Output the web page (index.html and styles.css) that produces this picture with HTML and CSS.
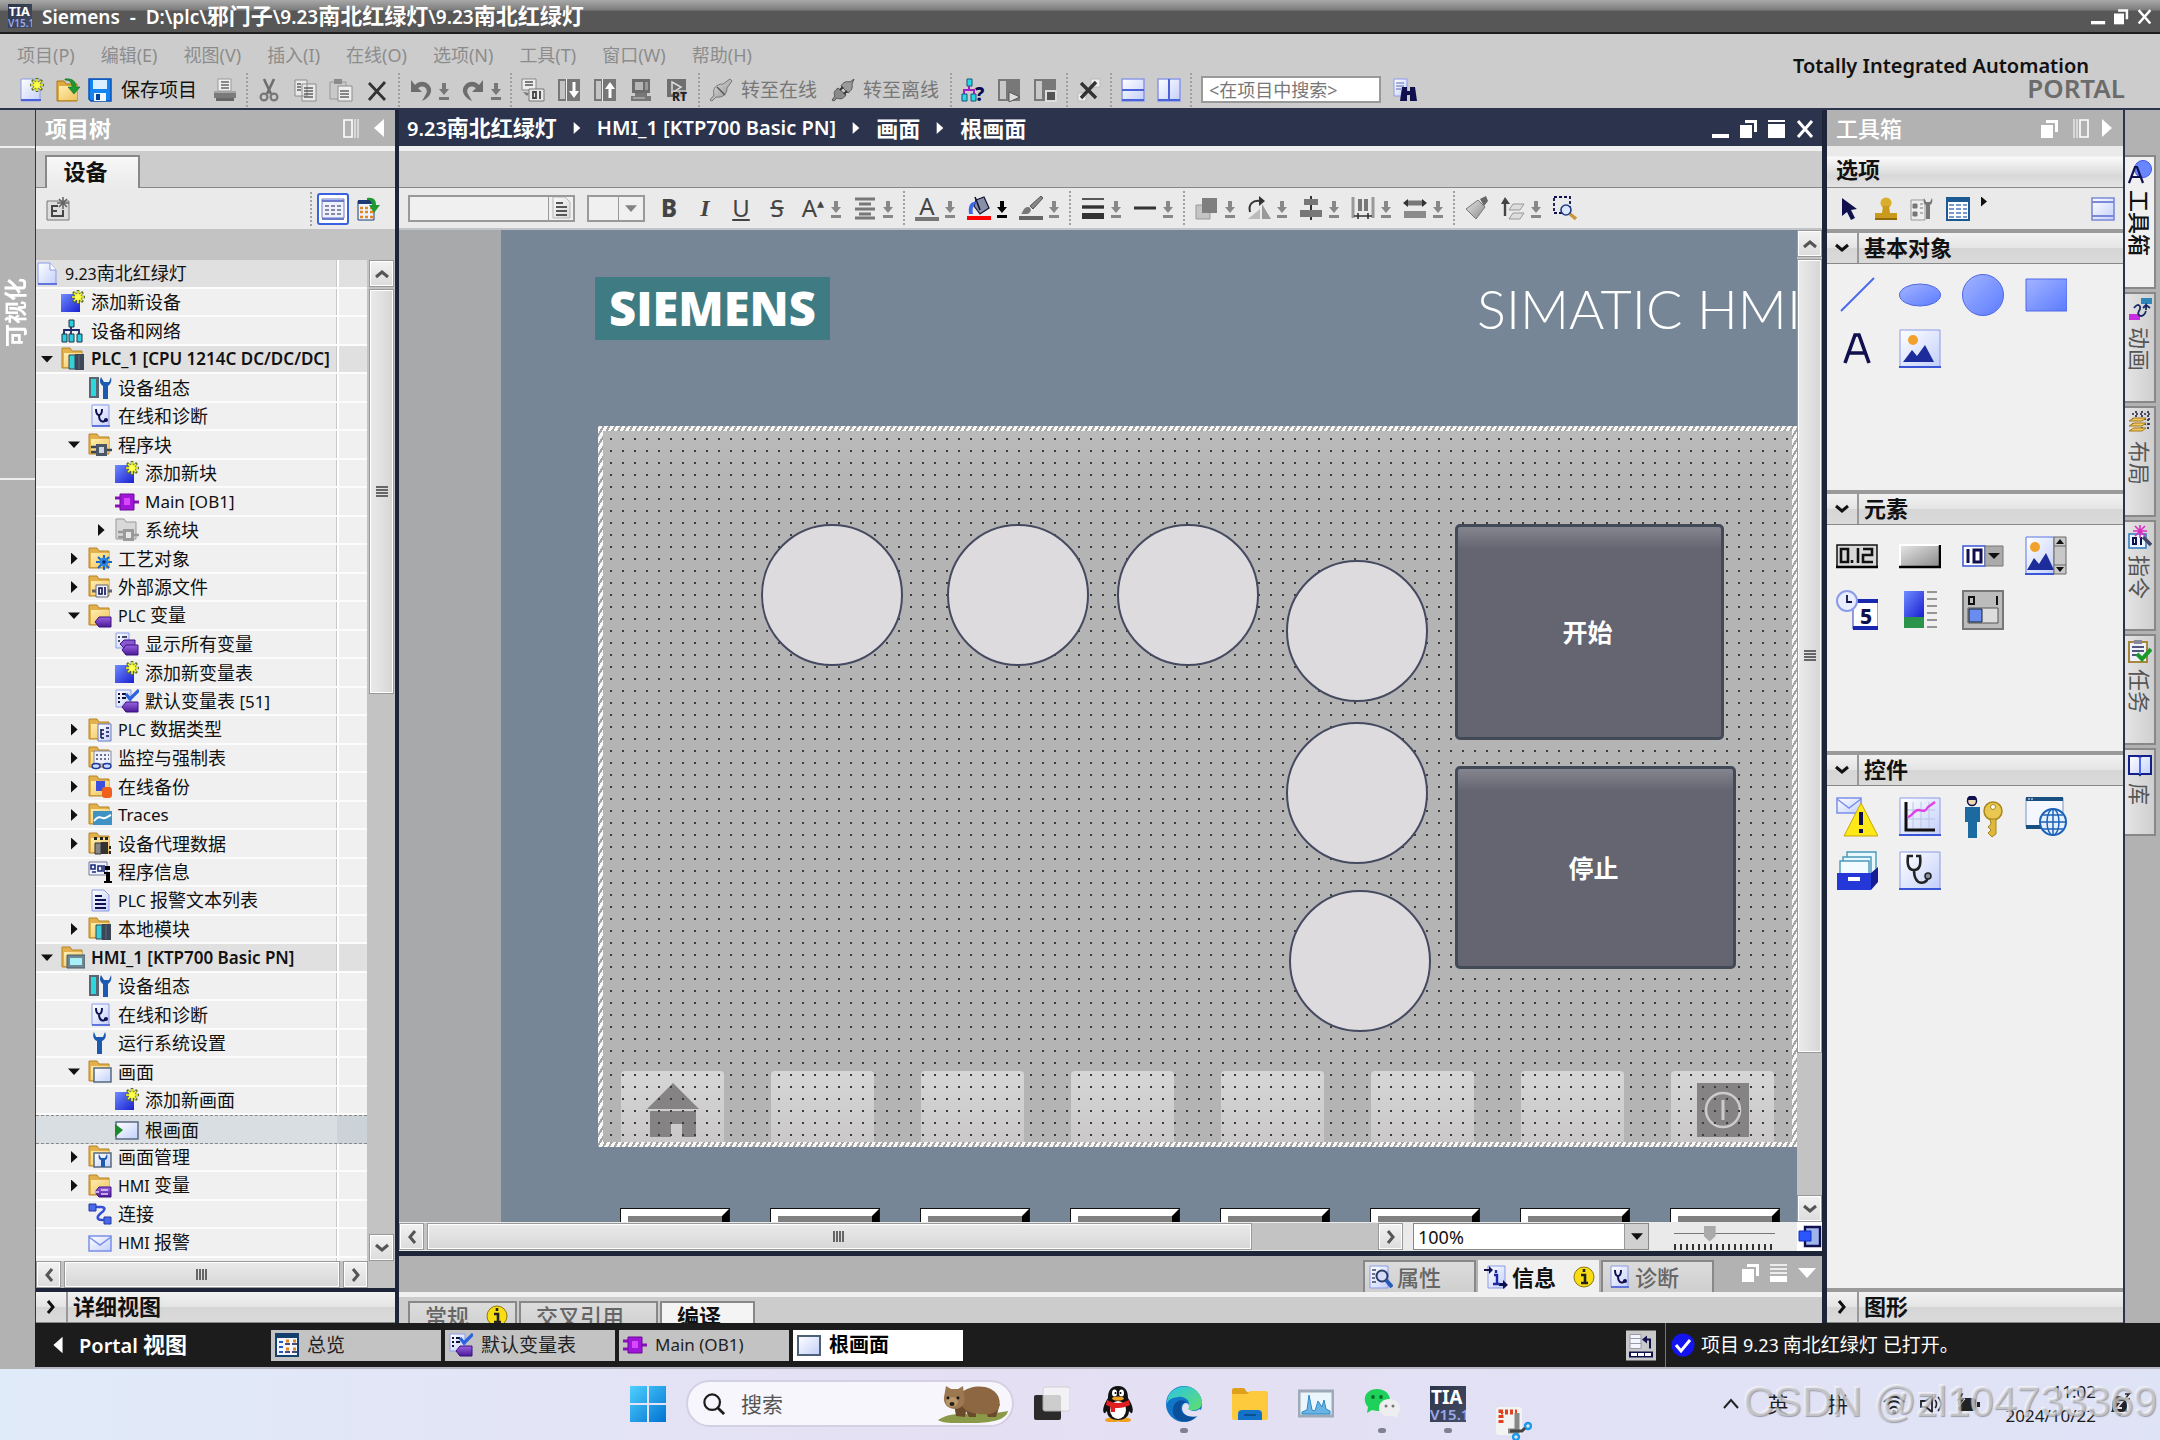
FILE: index.html
```html
<!DOCTYPE html>
<html lang="zh-CN">

<head>
    <meta charset="UTF-8">
    <meta name="viewport" content="width=device-width, initial-scale=1.0">
    <title>Siemens - 9.23南北红绿灯</title>
    <link rel="stylesheet" href="styles.css">
</head>

<body>
    <!-- icon sprite -->
    <svg class="sprite" aria-hidden="true">
        <defs>
            <linearGradient id="g-blue" x1="0" y1="0" x2="1" y2="1"><stop offset="0" stop-color="#6f8cff"/><stop offset="1" stop-color="#1a1fd0"/></linearGradient>
            <linearGradient id="g-soft" x1="0" y1="0" x2="1" y2="1"><stop offset="0" stop-color="#a3b5ff"/><stop offset="1" stop-color="#5b7bff"/></linearGradient>
            <linearGradient id="g-page" x1="0" y1="0" x2="1" y2="1"><stop offset="0" stop-color="#fff"/><stop offset="1" stop-color="#c3cffa"/></linearGradient>
            <linearGradient id="g-fold" x1="0" y1="0" x2="1" y2="1"><stop offset="0" stop-color="#ffeeb0"/><stop offset="1" stop-color="#eec25c"/></linearGradient>
            <linearGradient id="g-gray" x1="0" y1="0" x2="1" y2="1"><stop offset="0" stop-color="#e6e6e6"/><stop offset="1" stop-color="#8a8a8a"/></linearGradient>
            <linearGradient id="g-pur" x1="0" y1="0" x2="0" y2="1"><stop offset="0" stop-color="#9a62e0"/><stop offset="1" stop-color="#4a1a96"/></linearGradient>
            <linearGradient id="g-edge" x1="0" y1="0" x2="1" y2="1"><stop offset="0" stop-color="#2cc3e8"/><stop offset="1" stop-color="#5fe06a"/></linearGradient>
            <linearGradient id="g-win" x1="0" y1="0" x2="1" y2="1"><stop offset="0" stop-color="#4fd0ff"/><stop offset="1" stop-color="#0072d0"/></linearGradient>
            <linearGradient id="g-tia" x1="0" y1="0" x2="1" y2="1"><stop offset="0" stop-color="#2c3448"/><stop offset="1" stop-color="#454e66"/></linearGradient>
        </defs>
        <symbol id="star" viewBox="0 0 24 24"><path d="M17 0v14M10 7h14M12 2l10 10M22 2L12 12" stroke="#5a6b20" stroke-width="2.6"/><path d="M17 1v12M11 7h12M13 3l8 8M21 3l-8 8" stroke="#ffff30" stroke-width="1.5"/><circle cx="17" cy="7" r="3" fill="#ffff50"/></symbol>
        <symbol id="new" viewBox="0 0 24 24"><path d="M1 1h19v22H1z" fill="url(#g-page)" stroke="#8b9be8"/><path d="M1 22h20" stroke="#4b62d8" stroke-width="2"/><use href="#star"/></symbol>
        <symbol id="open" viewBox="0 0 24 24"><path d="M1 3h7l2 3h11v17H1z" fill="#e0a93c" stroke="#a87918"/><path d="M3 8h18v14H3z" fill="url(#g-fold)"/><path d="M9 1c8-1 11 3 11 8h4l-6 7-6-7h4c0-4-2-7-7-7z" fill="#1f9a32" stroke="#0d6a1c" stroke-width=".6"/></symbol>
        <symbol id="save" viewBox="0 0 24 24"><path d="M1 1h22v22H3l-2-2z" fill="#1583f0" stroke="#0a50b8" stroke-width="1.5"/><path d="M5 2h14v9H5z" fill="#d8f0ff"/><path d="M6 15h12v8H6z" fill="#eef6ff"/><path d="M8 16h4v6H8z" fill="#063f9a"/></symbol>
        <symbol id="print" viewBox="0 0 24 24"><path d="M5 1h13v12H5z" fill="#f0f0f0" stroke="#999"/><path d="M8 4h8M8 7h8M8 10h8" stroke="#666" stroke-width="1.4"/><path d="M1 13h22v7H1z" fill="#7a7a7a"/><path d="M1 13h22v2H1z" fill="#a5a5a5"/><path d="M3 20h18v3H3z" fill="#666"/></symbol>
        <symbol id="cut" viewBox="0 0 24 24"><path d="M7 1l7 15M17 1l-7 15" stroke="#6e6e6e" stroke-width="2.6"/><circle cx="7" cy="19" r="3.4" fill="none" stroke="#777" stroke-width="2.2"/><circle cx="17" cy="19" r="3.4" fill="none" stroke="#777" stroke-width="2.2"/></symbol>
        <symbol id="copy" viewBox="0 0 24 24"><path d="M2 2h12v16H2zM9 6h14v17H9z" fill="#e9e9e9" stroke="#8c8c8c"/><path d="M4 6h4M4 9h4M4 12h4M11 10h9M11 13h9M11 16h9M11 19h9" stroke="#5f5f5f" stroke-width="1.5"/></symbol>
        <symbol id="paste" viewBox="0 0 24 24"><path d="M1 4h16v17H1z" fill="#c9c9c9" stroke="#999"/><path d="M5 1h8v5H5z" fill="#8b8b8b"/><path d="M9 8h14v15H9z" fill="#eee" stroke="#8c8c8c"/><path d="M11 13h9M11 16h9M11 19h9" stroke="#666" stroke-width="1.5"/></symbol>
        <symbol id="del" viewBox="0 0 24 24"><path d="M4 5l16 17M20 4L4 22" stroke="#333" stroke-width="2.8" fill="none"/></symbol>
        <symbol id="undo" viewBox="0 0 24 24"><path d="M2 2v12h11L9 10c5-4 11 0 8 6l-4 7c9-4 12-12 6-17-4-3-9-3-13 1z" fill="#6d6d6d"/></symbol>
        <symbol id="redo" viewBox="0 0 24 24"><path d="M22 2v12H11l4-4C10 6 4 10 7 16l4 7C2 19-1 11 5 6c4-3 9-3 13 1z" fill="#6d6d6d"/></symbol>
        <symbol id="dd" viewBox="0 0 10 24"><path d="M5 5v9" stroke="currentColor" stroke-width="4"/><path d="M0 11h10l-5 6zM0 19h10v3H0z" fill="currentColor"/></symbol>
        <symbol id="compile" viewBox="0 0 24 24"><path d="M1 1h14v11H1z" fill="#eee" stroke="#888"/><path d="M4 4h8M4 7h8" stroke="#555" stroke-width="1.6"/><path d="M2 14l4 4 2-3" fill="#777"/><path d="M8 11h15v12H8z" fill="#e8e8e8" stroke="#777"/><path d="M12 14h3v6h-3zM19 13v8" fill="none" stroke="#444" stroke-width="1.8"/></symbol>
        <symbol id="dl" viewBox="0 0 24 24"><path d="M1 1h22v22H1z" fill="#777"/><path d="M3 3h5v18H3z" fill="#c4c4c4"/><path d="M9 1h1v22H9z" fill="#eee"/><path d="M17 4v10" stroke="#fff" stroke-width="3"/><path d="M12 13h10l-5 7z" fill="#fff"/></symbol>
        <symbol id="ul" viewBox="0 0 24 24"><path d="M1 1h22v22H1z" fill="#777"/><path d="M3 3h5v18H3z" fill="#c4c4c4"/><path d="M9 1h1v22H9z" fill="#eee"/><path d="M17 10v10" stroke="#fff" stroke-width="3"/><path d="M12 11h10l-5-7z" fill="#fff"/></symbol>
        <symbol id="sim" viewBox="0 0 24 24"><path d="M3 1h18v14H3z" fill="#6c6c6c"/><path d="M6 4h8v8H6z" fill="#b6b6b6"/><path d="M16 4h3v8h-3z" fill="#999"/><path d="M6 15h12v3H6zM2 18h20v5H2z" fill="#777"/><path d="M4 20h12" stroke="#ccc"/></symbol>
        <symbol id="rt" viewBox="0 0 24 24"><path d="M2 1h19v18H2z" fill="#6f6f6f"/><path d="M7 4l9 5-9 6z" fill="none" stroke="#ddd" stroke-width="1.5"/><path d="M8 12h16v12H8z" fill="#ccc" opacity=".7"/><text x="7" y="23" font-size="12" font-weight="800" fill="#222">RT</text></symbol>
        <symbol id="online" viewBox="0 0 24 24"><path d="M1 22l4-5c-2-7 3-11 9-11l7-5 2 2-5 7c0 6-4 10-11 9l-4 4z" fill="url(#g-gray)" stroke="#777"/><path d="M8 9l8 8" stroke="#555" stroke-width="1.4"/></symbol>
        <symbol id="offline" viewBox="0 0 24 24"><path d="M1 22l3-4c-2-3 0-6 3-8l8 7c-2 3-5 5-9 3l-3 3z" fill="#8a8a8a" stroke="#555"/><path d="M10 8c2-4 6-5 9-4l4-3-2 5c1 4-1 7-4 9z" fill="#9b9b9b" stroke="#555"/><path d="M9 12l3-3M13 16l3-3" stroke="#333" stroke-width="2"/></symbol>
        <symbol id="access" viewBox="0 0 24 24"><path d="M6 1h5v7H6zM1 16h5v7H1zM10 16h5v7h-5z" fill="#28d8e8" stroke="#157"/><path d="M8 8v4M3 16v-4h10v4" fill="none" stroke="#a020c0" stroke-width="2"/><text x="14" y="23" font-size="19" font-weight="800" fill="#0a0a50">?</text></symbol>
        <symbol id="start" viewBox="0 0 24 24"><path d="M1 1h22v22H1z" fill="#787878"/><path d="M3 3h6v18H3z" fill="#c8c8c8"/><path d="M12 14l11 5-11 5z" fill="#ddd" stroke="#555"/></symbol>
        <symbol id="stop" viewBox="0 0 24 24"><path d="M1 1h22v22H1z" fill="#787878"/><path d="M3 3h6v18H3z" fill="#c8c8c8"/><path d="M13 13h10v10H13z" fill="#555" stroke="#ddd" stroke-width="2"/></symbol>
        <symbol id="xref" viewBox="0 0 24 24"><path d="M14 1h9v8h-9zM1 15h8v8H1z" fill="#eee" stroke="#bbb"/><path d="M4 5l15 15M19 4L4 20" stroke="#333" stroke-width="3.4"/></symbol>
        <symbol id="splith" viewBox="0 0 24 24"><path d="M1 1h22v22H1z" fill="url(#g-page)" stroke="#8b9be8" stroke-width="1.6"/><path d="M1 12h22M1 22h22" stroke="#4b62d8" stroke-width="2"/></symbol>
        <symbol id="splitv" viewBox="0 0 24 24"><path d="M1 1h22v22H1z" fill="url(#g-page)" stroke="#8b9be8" stroke-width="1.6"/><path d="M12 1v22M1 22h22" stroke="#4b62d8" stroke-width="2"/></symbol>
        <symbol id="binoc" viewBox="0 0 24 24"><path d="M1 1h13v17H1z" fill="url(#g-page)" stroke="#8b9be8"/><path d="M3 5h8M3 8h8M3 11h5" stroke="#5a6ab8"/><path d="M9 9h5v4h3V9h5l2 14h-7v-6h-3v6H7z" fill="#10104f"/></symbol>
        <!-- formatting -->
        <symbol id="align" viewBox="0 0 24 24"><path d="M2 3h20M6 8h12M2 13h20M6 18h12M2 22h20" stroke="#777" stroke-width="3"/></symbol>
        <symbol id="fill" viewBox="0 0 24 24"><path d="M9 4l8-3 5 11-9 6-6-8z" fill="#8890a8" stroke="#113" stroke-width="1.2"/><path d="M8 1l5 13" stroke="#113" stroke-width="1.6"/><path d="M2 18c-1-9 2-13 8-12-4 3-5 7-4 12z" fill="#3f66e8"/><path d="M0 20h24v4H0z" fill="red"/></symbol>
        <symbol id="brush" viewBox="0 0 24 24"><path d="M22 0L11 10l3 3L24 2z" fill="#888" stroke="#555"/><path d="M2 18c2-1 2-7 7-7 4 0 4 6-1 7z" fill="#777"/><path d="M0 20h24v4H0z" fill="#666"/></symbol>
        <symbol id="lines" viewBox="0 0 24 24"><path d="M1 3h22" stroke="#333" stroke-width="1.6"/><path d="M1 11h22" stroke="#333" stroke-width="3.4"/><path d="M1 20h22" stroke="#333" stroke-width="6"/></symbol>
        <symbol id="line" viewBox="0 0 24 24"><path d="M1 12h22" stroke="#333" stroke-width="3"/></symbol>
        <symbol id="layer" viewBox="0 0 24 24"><path d="M1 9h14v14H1z" fill="#c4c4c4" stroke="#999"/><path d="M7 2h15v15H7z" fill="#7f7f7f"/></symbol>
        <symbol id="rotate" viewBox="0 0 24 24"><path d="M1 23h12V13z" fill="#bbb"/><path d="M15 23h9L15 8z" fill="#999"/><path d="M3 16C1 8 6 4 13 5" fill="none" stroke="#333" stroke-width="2"/><path d="M12 0l6 5-6 5z" fill="#333"/></symbol>
        <symbol id="centerh" viewBox="0 0 24 24"><path d="M12 0v24" stroke="#333" stroke-width="2"/><path d="M5 3h14v6H5zM1 14h22v7H1z" fill="#777"/></symbol>
        <symbol id="distr" viewBox="0 0 24 24"><path d="M2 1v21M22 1v21" stroke="#999" stroke-width="3"/><path d="M9 3v12M15 3v12" stroke="#777" stroke-width="4"/><path d="M3 20h18M7 17v6M17 17v6" stroke="#333" stroke-width="1.6"/></symbol>
        <symbol id="samew" viewBox="0 0 24 24"><path d="M3 7h18" stroke="#777" stroke-width="5"/><path d="M0 7l5-4v8zM24 7l-5-4v8z" fill="#333"/><path d="M1 15h22v7H1z" fill="#8a8a8a"/></symbol>
        <symbol id="format" viewBox="0 0 24 24"><path d="M15 3l6-3 2 5-4 5z" fill="#666"/><path d="M1 13L13 4l7 7-9 12z" fill="url(#g-gray)" stroke="#777"/></symbol>
        <symbol id="order" viewBox="0 0 24 24"><path d="M4 8v12" stroke="#444" stroke-width="2.4"/><path d="M0 8h9L4 1z" fill="#444"/><path d="M12 8h11l-4 6H8zM12 17h11l-4 6H8z" fill="#ddd" stroke="#999"/></symbol>
        <symbol id="zoomsel" viewBox="0 0 24 24"><path d="M1 1h16v16H1z" fill="none" stroke="#10104f" stroke-width="1.8" stroke-dasharray="3 2"/><circle cx="13" cy="14" r="5" fill="#dbe6ff" stroke="#223a8a" stroke-width="1.6"/><path d="M17 18l6 5" stroke="#c8963c" stroke-width="3.4"/></symbol>
        <!-- project tree -->
        <symbol id="doc" viewBox="0 0 24 24"><path d="M1 1h12l6 7v14H1z" fill="url(#g-page)" stroke="#8b9be8"/><path d="M13 1v7h6" fill="#fff" stroke="#8b9be8"/><path d="M1 22h19" stroke="#4b62d8" stroke-width="1.6"/></symbol>
        <symbol id="add" viewBox="0 0 24 24"><path d="M0 4h19v18H0z" fill="url(#g-blue)"/><use href="#star"/></symbol>
        <symbol id="net" viewBox="0 0 24 24"><path d="M8 1h5v7H8zM1 15h5v8H1zM8 15h5v8H8zM16 15h5v8h-5z" fill="#28d0e0" stroke="#234"/><path d="M10 8v7M3 15v-4h15v4" fill="none" stroke="#1d2a66" stroke-width="1.8"/></symbol>
        <symbol id="folder" viewBox="0 0 24 24"><path d="M1 1h8l2 3h10v17H1z" fill="#e3b04b" stroke="#b58528"/><path d="M3 6h18v14H3z" fill="url(#g-fold)"/></symbol>
        <symbol id="f-mod" viewBox="0 0 24 24"><use href="#folder"/><path d="M8 8h6v14H8z" fill="#38d0d8" stroke="#345"/><path d="M14 7h9v16h-9z" fill="#3c4656"/><path d="M18 8v14" stroke="#5e6a7c"/></symbol>
        <symbol id="f-blk" viewBox="0 0 24 24"><use href="#folder"/><path d="M3 14h5M3 19h5M18 17h6" stroke="#3c4656" stroke-width="2.4"/><path d="M8 11h11v12H8z" fill="#4a5566"/><path d="M11 14h5v6h-5z" fill="#ccd4e0"/></symbol>
        <symbol id="g-blk" viewBox="0 0 24 24"><path d="M1 1h8l2 3h10v17H1z" fill="#d8d8d8" stroke="#999"/><path d="M3 14h5M3 19h5M18 17h6" stroke="#999" stroke-width="2.4"/><path d="M8 11h11v12H8z" fill="#9a9a9a"/><path d="M11 14h5v6h-5z" fill="#e8e8e8"/></symbol>
        <symbol id="f-gear" viewBox="0 0 24 24"><use href="#folder"/><path d="M16 8v15M8 15h16M10 10l11 11M21 10L10 21" stroke="#1668c8" stroke-width="2"/><circle cx="16" cy="15" r="4.500" fill="#2a86e0"/><circle cx="16" cy="15" r="1.800" fill="#0a2a70"/></symbol>
        <symbol id="f-01" viewBox="0 0 24 24"><use href="#folder"/><path d="M4 16h20" stroke="#666" stroke-width="3"/><path d="M8 10h12v12H8z" fill="#eef2ff" stroke="#667"/><path d="M11 13h3v6h-3zM17 12v8" fill="none" stroke="#10104f" stroke-width="1.6"/></symbol>
        <symbol id="tag" viewBox="0 0 24 24"><path d="M11 13h12v10H11l-4-5z" fill="url(#g-pur)" stroke="#3a1280"/></symbol>
        <symbol id="f-tag" viewBox="0 0 24 24"><use href="#folder"/><use href="#tag"/></symbol>
        <symbol id="f-htag" viewBox="0 0 24 24"><use href="#folder"/><use href="#tag"/><path d="M5 18h6M13 16h7M13 20h7" stroke="#e4d4ff" stroke-width="1.500"/></symbol>
        <symbol id="tags" viewBox="0 0 24 24"><path d="M1 1h13v15H1z" fill="url(#g-page)" stroke="#8b9be8"/><path d="M3 5h2M7 5h5M3 9h2" stroke="#113" stroke-width="1.6"/><path d="M9 8h11v8H9l-4-4z" fill="#8a58d0" stroke="#3a1280"/><use href="#tag"/></symbol>
        <symbol id="tagtab" viewBox="0 0 24 24"><path d="M1 1h15v17H1z" fill="url(#g-page)" stroke="#8b9be8"/><path d="M3 5h2M3 9h2M3 13h2M7 5h4M7 9h4" stroke="#113" stroke-width="1.8"/><path d="M11 5l4 5 9-9" fill="none" stroke="#2a62e0" stroke-width="3.2"/><use href="#tag"/></symbol>
        <symbol id="config" viewBox="0 0 24 24"><path d="M1 1h10v21H1z" fill="#5a6672"/><path d="M3 3h5v17H3z" fill="#2ad8e0"/><path d="M13 1c-2 4-1 7 2 9v13h5V10c3-2 4-5 3-9l-2 5h-5z" fill="#1b5ab0"/></symbol>
        <symbol id="diag" viewBox="0 0 24 24"><path d="M4 1h17v21H4z" fill="url(#g-page)" stroke="#8b9be8"/><path d="M4 22h18" stroke="#4b62d8" stroke-width="1.600"/><path d="M8 5c0 8 6 8 6 0M11 11c0 9 7 7 6 4" fill="none" stroke="#10104f" stroke-width="2"/><circle cx="18" cy="16" r="2" fill="#10104f"/></symbol>
        <symbol id="ob" viewBox="0 0 24 24"><path d="M0 8h6M0 16h6M18 12h6" stroke="#8a10b8" stroke-width="3"/><path d="M5 4h14v16H5z" fill="#a016d8" stroke="#6a0a98"/><path d="M9 8h6v7H9z" fill="#d846ff"/></symbol>
        <symbol id="f-str" viewBox="0 0 24 24"><use href="#folder"/><path d="M10 6h13v17H10z" fill="url(#g-page)" stroke="#6a7ac0"/><path d="M13 11v9M13 12h3M13 16h3M13 20h3M18 10h3M18 14h3M18 18h3" stroke="#10104f" stroke-width="1.500"/></symbol>
        <symbol id="f-watch" viewBox="0 0 24 24"><use href="#folder"/><path d="M6 5h17v13H6z" fill="#eef2ff" stroke="#889"/><path d="M8 9h13M8 13h13" stroke="#446" stroke-dasharray="2 2" stroke-width="1.600"/><ellipse cx="8" cy="20" rx="4" ry="2.500" fill="#ccd8ff" stroke="#1a3a9a" stroke-width="1.500"/><ellipse cx="19" cy="20" rx="4" ry="2.500" fill="#ccd8ff" stroke="#1a3a9a" stroke-width="1.500"/></symbol>
        <symbol id="f-bak" viewBox="0 0 24 24"><use href="#folder"/><path d="M8 6h9v10H8z" fill="#3a4fe0"/><rect x="14" y="12" width="10" height="11" rx="3" fill="#f0601c"/></symbol>
        <symbol id="f-tr" viewBox="0 0 24 24"><use href="#folder"/><path d="M5 8h19v14H5z" fill="#3f93c4"/><path d="M6 18c4-5 6-4 9-3s5-2 8-3" fill="none" stroke="#fff" stroke-width="2"/></symbol>
        <symbol id="f-prx" viewBox="0 0 24 24"><use href="#folder"/><path d="M6 5h3v3H6zM12 5h3v3h-3zM17 5h3v3h-3z" fill="#222"/><path d="M7 11h6v11H7z" fill="#888" stroke="#333"/><path d="M13 10h7v12h-7z" fill="#333"/><path d="M21 14h2v3h-2zM21 19h2v3h-2z" fill="#222"/></symbol>
        <symbol id="proginfo" viewBox="0 0 24 24"><path d="M1 2h18v13H1z" fill="#eef2ff" stroke="#779"/><path d="M3 5h4v4H3zM10 6h4v5h-4zM4 12h4M16 5v7" fill="none" stroke="#1a2a7a" stroke-width="1.600"/><path d="M17 6h5v4h-5zM16 12h6v9h2v2h-8v-2h2v-7h-2z" fill="#000"/></symbol>
        <symbol id="textlist" viewBox="0 0 24 24"><path d="M4 1h12l5 5v16H4z" fill="url(#g-page)" stroke="#8b9be8"/><path d="M7 7h7M7 11h11M7 15h11M7 19h11" stroke="#10104f" stroke-width="1.800"/></symbol>
        <symbol id="f-hmi" viewBox="0 0 24 24"><use href="#folder"/><path d="M6 9h18v13H6z" fill="#6f8794" stroke="#4a5c66"/><path d="M9 12h12v7H9z" fill="#a8f0f8"/></symbol>
        <symbol id="wrench" viewBox="0 0 24 24"><path d="M6 1c-2 4 0 8 3 9v13h5V10c3-1 5-5 3-9l-2 5H8z" fill="#1b5ab0"/></symbol>
        <symbol id="f-scr" viewBox="0 0 24 24"><use href="#folder"/><path d="M6 8h17v14H6z" fill="url(#g-page)" stroke="#556a80" stroke-width="1.500"/></symbol>
        <symbol id="f-wr" viewBox="0 0 24 24"><use href="#f-scr"/><path d="M11 9c-1 3 0 6 2 6v7h4v-7c2 0 3-3 2-6l-2 4h-4z" fill="#1b5ab0"/></symbol>
        <symbol id="rootscr" viewBox="0 0 24 24"><path d="M1 4h22v17H1z" fill="url(#g-page)" stroke="#556a80" stroke-width="1.500"/><path d="M0 6l8 6-8 7z" fill="#1a8a2a"/></symbol>
        <symbol id="conn" viewBox="0 0 24 24"><path d="M3 5h10c6 0 3 4 0 6-5 4-4 7 1 7h8" fill="none" stroke="#3550d8" stroke-width="2.600"/><path d="M1 2h7v7H1zM16 15h7v7h-7z" fill="#4a68e8" stroke="#2338a8"/></symbol>
        <symbol id="mail" viewBox="0 0 24 24"><path d="M1 5h22v15H1z" fill="url(#g-page)" stroke="#7a8ee8" stroke-width="1.500"/><path d="M1 6l11 8 11-8" fill="none" stroke="#7a8ee8" stroke-width="1.500"/></symbol>
        <!-- toolbox -->
        <symbol id="t-cursor" viewBox="0 0 24 24"><path d="M4 1v18l5-4 4 8 4-2-4-8 6-1z" fill="#10104f"/></symbol>
        <symbol id="t-stamp" viewBox="0 0 24 24"><circle cx="12" cy="6" r="5.500" fill="#d9ae2c"/><path d="M9 9h6l1 7h7v6H1v-6h7z" fill="#c99a1c"/><path d="M1 21h22v2H1z" fill="#8f6a0c"/></symbol>
        <symbol id="t-opt" viewBox="0 0 24 24"><path d="M1 3h14v20H1z" fill="#eee" stroke="#999"/><path d="M3 7h4v4H3zM3 15h4v4H3zM10 7h3M10 11h3M10 16h3" fill="#777" stroke="#777"/><path d="M14 1c-1 4 0 6 2 7v14h4V8c2-1 3-4 2-7l-2 4h-4z" fill="#777"/></symbol>
        <symbol id="t-table" viewBox="0 0 24 24"><path d="M1 1h22v22H1z" fill="#fff" stroke="#1d5a94" stroke-width="2"/><path d="M1 3h22" stroke="#1d5a94" stroke-width="4"/><path d="M3 8h18M3 12h18M3 16h18M3 20h18" stroke="#4a78c0" stroke-width="1.600"/><path d="M9 5v17M16 5v17" stroke="#fff" stroke-width="2"/></symbol>
        <symbol id="t-pane" viewBox="0 0 24 24"><path d="M1 1h22v22H1z" fill="url(#g-page)" stroke="#7a8ad8" stroke-width="1.600"/><path d="M1 5h22M1 19h22" stroke="#7a8ad8" stroke-width="2"/></symbol>
        <symbol id="b-line" viewBox="0 0 42 42"><path d="M5 37L38 4" stroke="#4a68f0" stroke-width="2"/></symbol>
        <symbol id="b-ell" viewBox="0 0 42 42"><ellipse cx="21" cy="21" rx="20.500" ry="11" fill="url(#g-soft)" stroke="#5068e8"/></symbol>
        <symbol id="b-cir" viewBox="0 0 42 42"><circle cx="21" cy="21" r="20.500" fill="url(#g-soft)" stroke="#5068e8"/></symbol>
        <symbol id="b-rect" viewBox="0 0 42 42"><path d="M1 5h41v32H1z" fill="url(#g-soft)" stroke="#5068e8"/></symbol>
        <symbol id="b-text" viewBox="0 0 42 42"><path d="M9 35L19 7h4l10 28M13 25h16" fill="none" stroke="#10104f" stroke-width="3.600"/></symbol>
        <symbol id="b-img" viewBox="0 0 42 42"><path d="M1 2h40v37H1z" fill="url(#g-page)" stroke="#8b9be8"/><path d="M0 39h42" stroke="#3a55d8" stroke-width="2"/><circle cx="14" cy="12" r="5" fill="#f2a22c"/><path d="M4 34l9-12 5 6 8-11 9 17z" fill="#1c2c9a"/></symbol>
        <symbol id="e-io" viewBox="0 0 42 42"><path d="M1 10h40v22H1z" fill="#d8d8d8" stroke="#111" stroke-width="1.500"/><path d="M0 32h42" stroke="#000" stroke-width="2.500"/><path d="M5 14h7v13H5zM16 25v3M22 13v15M27 14h9v6h-9v7h10" fill="none" stroke="#111" stroke-width="2.600"/></symbol>
        <symbol id="e-btn" viewBox="0 0 42 42"><path d="M1 10h40v22H1z" fill="url(#g-gray)" stroke="#fff" stroke-width="2"/><path d="M0 32h41V10" fill="none" stroke="#000" stroke-width="2.500"/></symbol>
        <symbol id="e-sym" viewBox="0 0 42 42"><path d="M1 11h22v20H1z" fill="#fff" stroke="#3a55d8" stroke-width="1.500"/><path d="M6 14v14M12 15h7v12h-7z" fill="none" stroke="#10104f" stroke-width="3"/><path d="M23 11h18v20H23z" fill="#aaa" stroke="#777"/><path d="M26 18h12l-6 6z" fill="#111"/></symbol>
        <symbol id="e-gio" viewBox="0 0 42 42"><path d="M1 2h28v37H1z" fill="url(#g-page)" stroke="#5b74e8"/><path d="M0 39h29" stroke="#3a55d8" stroke-width="2"/><circle cx="10" cy="12" r="5" fill="#f2a22c"/><path d="M2 35l7-12 5 6 7-11 8 17z" fill="#1c2c9a"/><path d="M29 2h12v37H29z" fill="#c8c8c8" stroke="#666"/><path d="M29 11h12M29 30h12" stroke="#666"/><path d="M31 9h8l-4-5zM31 32h8l-4 5z" fill="#111"/></symbol>
        <symbol id="e-date" viewBox="0 0 42 42"><path d="M17 12h25v28H17z" fill="#fff" stroke="#2b3fc0"/><path d="M17 12h25M17 39h25" stroke="#1a28b0" stroke-width="4"/><text x="24" y="35" font-size="21" font-weight="800" fill="#10104f">5</text><circle cx="11" cy="12" r="10" fill="#e8eeff" stroke="#8b9be8" stroke-width="2"/><path d="M11 6v7h5" fill="none" stroke="#10104f" stroke-width="1.800"/></symbol>
        <symbol id="e-bar" viewBox="0 0 42 42"><path d="M5 2h20v26H5z" fill="url(#g-blue)"/><path d="M5 28h20v11H5z" fill="#2c9448"/><path d="M28 3h10M28 10h10M28 17h10M28 24h10M28 31h10M28 38h10" stroke="#777" stroke-width="1.600"/></symbol>
        <symbol id="e-sw" viewBox="0 0 42 42"><path d="M1 2h40v38H1z" fill="#bcbcbc" stroke="#777" stroke-width="2"/><path d="M7 8h5v7H7zM35 7v9" fill="none" stroke="#111" stroke-width="2"/><path d="M6 19h30v15H6z" fill="#ddd" stroke="#555"/><path d="M7 20h13v13H7z" fill="#6a8cf0" stroke="#123"/></symbol>
        <symbol id="c-alarm" viewBox="0 0 42 42"><path d="M1 2h24v15H1z" fill="url(#g-page)" stroke="#7a8ee8" stroke-width="1.500"/><path d="M1 3l12 9 12-9" fill="none" stroke="#7a8ee8" stroke-width="1.500"/><path d="M25 7l17 33H8z" fill="#ffe818" stroke="#c8a808"/><path d="M25 16v13M25 33v4" stroke="#10104f" stroke-width="4"/></symbol>
        <symbol id="c-trend" viewBox="0 0 42 42"><path d="M1 2h40v37H1z" fill="url(#g-page)" stroke="#8b9be8"/><path d="M0 39h42" stroke="#3a55d8" stroke-width="2"/><path d="M14 6v26M22 6v26M30 6v26M8 14h28M8 23h28" stroke="#b8c4e8"/><path d="M7 6v28h29" fill="none" stroke="#111" stroke-width="3"/><path d="M9 21c5-1 6-8 11-7s6 2 9-3l7-5" fill="none" stroke="#e040e8" stroke-width="2.400"/></symbol>
        <symbol id="c-user" viewBox="0 0 42 42"><circle cx="10" cy="5" r="4.500" fill="#f0d8b0" stroke="#10104f" stroke-width="1.500"/><path d="M5 4c0-6 10-6 10 0z" fill="#10104f"/><path d="M3 11h15v15h-3v16H6V26H3z" fill="#1c6aa0"/><circle cx="31" cy="15" r="9" fill="#e8c850" stroke="#a8861c" stroke-width="1.500"/><circle cx="31" cy="11" r="2.500" fill="#fff" stroke="#a8861c"/><path d="M28 23h6v15l-4 3-4-4 3-3-3-3 3-3z" fill="#dcb83c" stroke="#a8861c"/></symbol>
        <symbol id="c-html" viewBox="0 0 42 42"><path d="M1 2h37v29H1z" fill="#f4f7ff" stroke="#7a96c0"/><path d="M1 3h37M1 31h18" stroke="#1a5080" stroke-width="4"/><path d="M3 3h6" stroke="#fff" stroke-dasharray="2 1"/><circle cx="28" cy="26" r="13" fill="#e4f0ff" stroke="#1c62b8" stroke-width="2"/><path d="M28 13v26M15 26h26M18 19h20M18 33h20" stroke="#1c62b8" stroke-width="1.500"/><ellipse cx="28" cy="26" rx="6" ry="13" fill="none" stroke="#1c62b8" stroke-width="1.500"/></symbol>
        <symbol id="c-recipe" viewBox="0 0 42 42"><path d="M11 2h29v22H11z" fill="#e8f8ff" stroke="#4a98b8" stroke-width="1.400"/><path d="M7 7h28v20H7z" fill="#e8f8ff" stroke="#4a98b8" stroke-width="1.400"/><path d="M4 11h29v18H4z" fill="#f2fbff" stroke="#4a98b8" stroke-width="1.400"/><path d="M1 23h34v17H1z" fill="#2438d8"/><path d="M35 23l7-6v15l-7 8z" fill="#141c98"/><path d="M12 27h12v4H12z" fill="#fff"/></symbol>
        <symbol id="c-diag" viewBox="0 0 42 42"><path d="M1 2h40v37H1z" fill="url(#g-page)" stroke="#8b9be8"/><path d="M0 39h42" stroke="#3a55d8" stroke-width="2"/><path d="M14 6h-5c-1 8 0 14 6 14s7-6 6-14h-4M15 20c0 18 15 14 14 6" fill="none" stroke="#222" stroke-width="2.600"/><circle cx="29" cy="26" r="3" fill="#8890a0" stroke="#222" stroke-width="1.500"/></symbol>
        <!-- window + misc -->
        <symbol id="w-min" viewBox="0 0 18 24"><path d="M0 18h17v4H0z" fill="currentColor"/></symbol>
        <symbol id="w-res" viewBox="0 0 18 24"><path d="M0 9h12v13H0z" fill="currentColor"/><path d="M5 4h12v12h-3V7H5z" fill="currentColor"/></symbol>
        <symbol id="w-max" viewBox="0 0 18 24"><path d="M0 4h17v2H0zM0 8h17v14H0z" fill="currentColor"/></symbol>
        <symbol id="w-x" viewBox="0 0 18 24"><path d="M2 5l14 16M16 5L2 21" stroke="currentColor" stroke-width="3"/></symbol>
        <symbol id="w-cols" viewBox="0 0 18 24"><path d="M1 4h8v17H1z" fill="none" stroke="currentColor" stroke-width="1.600"/><path d="M12 3v19M15 3v19" stroke="currentColor"/></symbol>
        <symbol id="w-list" viewBox="0 0 18 24"><path d="M0 5h17M0 9h17M0 13h17" stroke="currentColor" stroke-width="1.500"/><path d="M0 16h17v6H0z" fill="currentColor"/></symbol>
        <symbol id="w-left" viewBox="0 0 12 24"><path d="M11 3v18L1 12z" fill="currentColor"/></symbol>
        <symbol id="w-right" viewBox="0 0 12 24"><path d="M1 3v18l10-9z" fill="currentColor"/></symbol>
        <symbol id="w-down" viewBox="0 0 18 24"><path d="M0 8h18l-9 10z" fill="currentColor"/></symbol>
        <symbol id="ch-u" viewBox="0 0 16 16"><path d="M2 11l6-5 6 5" fill="none" stroke="currentColor" stroke-width="3"/></symbol>
        <symbol id="ch-d" viewBox="0 0 16 16"><path d="M2 5l6 5 6-5" fill="none" stroke="currentColor" stroke-width="3"/></symbol>
        <symbol id="ch-l" viewBox="0 0 16 16"><path d="M11 2L6 8l5 6" fill="none" stroke="currentColor" stroke-width="3"/></symbol>
        <symbol id="ch-r" viewBox="0 0 16 16"><path d="M5 2l5 6-5 6" fill="none" stroke="currentColor" stroke-width="3"/></symbol>
        <symbol id="listview" viewBox="0 0 24 24"><path d="M1 2h22v19H1z" fill="#eef2ff" stroke="#6a7ac8"/><path d="M1 4h22M1 22h22" stroke="#6a7ac8" stroke-width="2"/><path d="M4 9h4M10 9h4M16 9h4M4 13h4M10 13h4M16 13h4M4 17h4M10 17h4M16 17h4" stroke="#668" stroke-width="1.500"/></symbol>
        <symbol id="export" viewBox="0 0 24 24"><path d="M1 4h16v19H1z" fill="#eef2ff" stroke="#1d3a74"/><path d="M1 5h16" stroke="#1d3a74" stroke-width="4"/><path d="M3 11h3M8 11h3M13 11h3M3 15h3M8 15h3M13 15h3M3 20h3M8 20h3M13 20h3" stroke="#e08820" stroke-width="2.600"/><path d="M10 1c7-1 9 2 9 7h4l-6 8-5-8h3c0-3-1-5-5-5z" fill="#1f9a32"/></symbol>
        <symbol id="newgrp" viewBox="0 0 24 24"><path d="M1 4h22v19H1z" fill="#ddd" stroke="#777"/><path d="M5 9h7M5 14h6M5 19h12M6 9v10M17 13v7" stroke="#444" stroke-width="2"/><path d="M17 0v12M11 6h12M13 2l8 8M21 2l-8 8" stroke="#666" stroke-width="1.600"/></symbol>
        <symbol id="overview" viewBox="0 0 24 24"><path d="M1 1h22v22H1z" fill="#f4f6ff" stroke="#14406e" stroke-width="2"/><path d="M1 3h22" stroke="#14406e" stroke-width="4"/><path d="M4 9h4M4 14h4M4 19h4" stroke="#2458c8" stroke-width="2"/><path d="M10 11h5M17 11h5M10 19h5M17 19h5" stroke="#10104f" stroke-width="1.500"/><path d="M11 8h3M18 8h3M11 16h3M18 16h3" stroke="#e08820" stroke-width="3"/></symbol>
        <symbol id="scr" viewBox="0 0 24 24"><path d="M1 3h22v19H1z" fill="url(#g-page)" stroke="#4c6076" stroke-width="2"/></symbol>
        <symbol id="props" viewBox="0 0 24 24"><path d="M1 1h18v22H1z" fill="url(#g-page)" stroke="#8b9be8"/><path d="M3 5h4M3 9h3M3 13h3M3 17h4" stroke="#446" stroke-width="1.500"/><circle cx="13" cy="11" r="5.500" fill="#d4dcf8" stroke="#2a3a6a" stroke-width="2"/><path d="M17 15l6 7" stroke="#2a5ab8" stroke-width="4"/></symbol>
        <symbol id="infoarr" viewBox="0 0 24 24"><path d="M4 1h17v22H4z" fill="url(#g-page)" stroke="#8b9be8"/><path d="M0 4h5V1l4 4-4 4V6H0zM15 18h4v-3l5 5-5 4v-3h-4z" fill="#10104f"/><path d="M10 10h3v9M9 19h7M12 5v3" fill="none" stroke="#1a2aa8" stroke-width="2.400"/></symbol>
        <symbol id="info" viewBox="0 0 24 24"><circle cx="12" cy="12" r="10" fill="#f8dc14" stroke="#8f7a00"/><path d="M9 10h4v8M9 18h7M12 4v3" fill="none" stroke="#222" stroke-width="2.600"/></symbol>
        <symbol id="ovl" viewBox="0 0 24 24"><path d="M7 2h15v19H7z" fill="#9fb4ea" stroke="#10104f" stroke-width="2.400"/><path d="M1 6h12v10H1z" fill="#2a55ff" stroke="#1030c0"/></symbol>
        <!-- side tabs -->
        <symbol id="s-tool" viewBox="0 0 24 24"><circle cx="15" cy="9" r="8.500" fill="#6a86ff" stroke="#3c58e0"/><path d="M1 23L7 7h2l6 16M4 17h9" fill="none" stroke="#10104f" stroke-width="2.200"/></symbol>
        <symbol id="s-anim" viewBox="0 0 24 24"><path d="M13 1h11v6H13z" fill="#2c86b8"/><path d="M1 17h11v6H1z" fill="#c82ce0"/><path d="M6 11c4-6 8-2 5 3s4 8 7 0M18 13V8l-3 3M18 8l4 3" fill="none" stroke="#1a2a66" stroke-width="1.800"/></symbol>
        <symbol id="s-lay" viewBox="0 0 24 24"><path d="M4 3h20M4 8h20M4 13h20M8 0v16M14 0v20M20 0v18" stroke="#224" stroke-dasharray="2 2" stroke-width="1.600"/><path d="M1 20h13l4-3H6zM1 15h13l4-3H6zM1 10h13l4-3H6z" fill="#f0c860" stroke="#a87818"/></symbol>
        <symbol id="s-ins" viewBox="0 0 24 24"><path d="M1 9h17v14H1z" fill="#e8f4ff" stroke="#2a78c0" stroke-width="1.500"/><path d="M5 13h3v6H5zM13 12v8" fill="none" stroke="#10104f" stroke-width="2"/><path d="M12 0v13M5 6h14M7 1l10 10M17 1L7 11" stroke="#e02cc0" stroke-width="1.600"/><path d="M15 12l8 8" stroke="#446" stroke-width="3.400"/></symbol>
        <symbol id="s-task" viewBox="0 0 24 24"><path d="M1 3h18v20H1z" fill="#eef2ff" stroke="#a8863c" stroke-width="2"/><path d="M6 1h8v4H6z" fill="#889"/><path d="M4 8h12M4 12h12M4 16h7" stroke="#225" stroke-width="1.600"/><path d="M9 15l5 5 9-10" fill="none" stroke="#1a9a2a" stroke-width="4"/></symbol>
        <symbol id="s-lib" viewBox="0 0 24 24"><path d="M1 3h10l1 2 1-2h10v18H13l-1 1-1-1H1z" fill="url(#g-page)" stroke="#14208a" stroke-width="2"/><path d="M12 4v17" stroke="#4a68f0" stroke-width="2"/></symbol>
        <!-- taskbar -->
        <symbol id="k-win" viewBox="0 0 36 36"><path d="M0 0h17v17H0zM19 0h17v17H19zM0 19h17v17H0zM19 19h17v17H19z" fill="url(#g-win)"/></symbol>
        <symbol id="k-view" viewBox="0 0 36 36"><rect x="0" y="9" width="27" height="25" rx="2" fill="#2b2b2b"/><rect x="9" y="1" width="27" height="24" rx="2" fill="#f6f6f6" opacity=".8" stroke="#ccc"/></symbol>
        <symbol id="k-qq" viewBox="0 0 36 36"><ellipse cx="12" cy="34" rx="7" ry="2.500" fill="#f0a020"/><ellipse cx="24" cy="34" rx="7" ry="2.500" fill="#f0a020"/><path d="M18 0c8 0 10 6 10 12 4 6 6 12 4 15-1 1-3-2-3-2 0 6-5 9-11 9S7 31 7 25c0 0-2 3-3 2-2-3 0-9 4-15C8 6 10 0 18 0z" fill="#111"/><ellipse cx="18" cy="24" rx="8" ry="9" fill="#fff"/><path d="M7 14c7 4 15 4 22 0l1 5c-8 4-16 4-24 0zM10 19h5v7h-4z" fill="#e02020"/><ellipse cx="14.500" cy="7" rx="2.500" ry="3.500" fill="#fff"/><ellipse cx="21.500" cy="7" rx="2.500" ry="3.500" fill="#fff"/><circle cx="15.500" cy="7" r="1"/><circle cx="20.500" cy="7" r="1"/><ellipse cx="18" cy="12.500" rx="6" ry="2" fill="#f0a020"/></symbol>
        <symbol id="k-edge" viewBox="0 0 36 36"><circle cx="18" cy="18" r="18" fill="#1276c8"/><path d="M1 15C3-3 33-6 36 16c0 7-6 9-13 8-3-1 0-3 0-6 0-5-6-8-11-7S2 13 1 18z" fill="url(#g-edge)"/><path d="M15 22c0 6 6 9 12 8 3 0 5-2 6-3-4 7-13 11-21 7-7-4-7-15 0-19 4-2 8 0 9 2-4-1-6 2-6 5z" fill="#0a4f9c"/><path d="M19 17c4 0 5 3 3 6 2 2 8 3 12 0l2 3-3 4c-8 2-16 0-17-7 0-3 1-5 3-6z" fill="#e3e0f4"/></symbol>
        <symbol id="k-folder" viewBox="0 0 36 36"><path d="M0 4q0-2 2-2h10l3 4h18v6H0z" fill="#dfa01c"/><path d="M0 8h15l3-3h16q2 0 2 2v25q0 2-2 2H2q-2 0-2-2z" fill="#fcca3c"/><path d="M6 34v-6q0-4 4-4h16q4 0 4 4v6z" fill="#1273c8"/><path d="M12 28h12v2H12z" fill="#0b4f94"/></symbol>
        <symbol id="k-chart" viewBox="0 0 36 36"><path d="M1 5h34v25H1z" fill="#eaf5fc" stroke="#9eaab8" stroke-width="3"/><path d="M4 26l5-2 2-15 3 15 3 1 3-10 4 6 2-7 2 9 4 2v3H4z" fill="#6ab4e4" stroke="#2a88c8"/></symbol>
        <symbol id="k-wechat" viewBox="0 0 36 36"><path d="M13 3c8 0 13 5 13 11s-5 11-13 11l-5-1-5 3 1-6C-3 13 2 3 13 3z" fill="#1fd15a"/><ellipse cx="9" cy="11" rx="1.800" ry="2" fill="#0b6a2c"/><ellipse cx="17" cy="11" rx="1.800" ry="2" fill="#0b6a2c"/><path d="M25 13c7 0 11 4 11 9 0 3-1 5-3 6l1 4-5-2c-8 1-14-2-14-8 0-5 4-9 10-9z" fill="#eeeef0"/><circle cx="22" cy="20" r="1.500" fill="#777"/><circle cx="29" cy="20" r="1.500" fill="#777"/></symbol>
        <symbol id="k-tia" viewBox="0 0 36 36"><path d="M0 0h36v36H0z" fill="url(#g-tia)"/><text x="1" y="18" font-size="19" font-weight="700" fill="#fff">TIA</text><text x="0" y="34" font-size="15" font-weight="600" fill="#9aa8ea">V15.1</text></symbol>
        <symbol id="k-snip" viewBox="0 0 36 36"><rect x="0" y="2" width="26" height="28" rx="3" fill="#f3f3f3"/><path d="M5 18V7h16" fill="none" stroke="#e0401c" stroke-width="5" stroke-dasharray="3 2"/><path d="M21 8v18h-9" fill="none" stroke="#888" stroke-width="5"/><circle cx="32" cy="21" r="3" fill="none" stroke="#189ae8" stroke-width="2.400"/><circle cx="20" cy="32" r="3" fill="none" stroke="#189ae8" stroke-width="2.400"/><path d="M14 26h12l3-3" stroke="#444" stroke-width="3" fill="none"/></symbol>
        <symbol id="k-bear" viewBox="0 0 70 40"><path d="M0 36c16-11 40-3 70-9-2 10-20 12-36 12S6 40 0 36z" fill="#8a9a48"/><path d="M18 32l-2-12h46l-4 13h-8l-2-6-10 1v5h-7l-3-6-1 6z" fill="#6b4a2c"/><path d="M24 8c10-8 30-8 36 4 5 11-2 18-10 18-10 1-22-1-26-8z" fill="#8d6741"/><path d="M8 2l5 3h7l5-3 1 9c2 8-2 14-9 14S5 20 6 13z" fill="#9c7850"/><ellipse cx="14" cy="18" rx="6" ry="5" fill="#b8966c"/><ellipse cx="14" cy="20" rx="2.500" ry="2" fill="#221"/><circle cx="10" cy="14" r="1.400" fill="#111"/><circle cx="20" cy="14" r="1.400" fill="#111"/></symbol>
        <symbol id="k-search" viewBox="0 0 24 24"><circle cx="10" cy="10" r="8.500" fill="none" stroke="#1c1c1c" stroke-width="2.400"/><path d="M16 16l7 7" stroke="#1c1c1c" stroke-width="3"/></symbol>
        <symbol id="k-wifi" viewBox="0 0 24 24"><path d="M2 10c6-7 14-7 20 0M5 13c4-5 10-5 14 0M8 17c2-3 6-3 8 0" fill="none" stroke="#222" stroke-width="1.800"/><circle cx="12" cy="20" r="2" fill="#222"/></symbol>
        <symbol id="k-vol" viewBox="0 0 24 24"><path d="M2 9h5l6-5v16l-6-5H2z" fill="none" stroke="#222" stroke-width="1.800"/><path d="M16 8c2 2 2 6 0 8M19 5c4 4 4 10 0 14" fill="none" stroke="#222" stroke-width="1.600"/></symbol>
        <symbol id="k-bat" viewBox="0 0 24 24"><rect x="2" y="6" width="18" height="13" rx="3" fill="#222"/><path d="M21 10h3v5h-3z" fill="#222"/><path d="M5 1L0 9h4l-2 6 7-8H5l3-6z" fill="#222" stroke="#e0e2f5"/></symbol>
        <symbol id="k-bell" viewBox="0 0 24 24"><path d="M10 4c5 0 8 4 8 9v5l1 2H2l1-2v-5c0-5 2-9 7-9zM7 21h7l-3 3z" fill="#222"/><path d="M8 10h5l-5 6h5" fill="none" stroke="#dfe0f4" stroke-width="1.800"/><path d="M16 2h4l-4 5h5" fill="none" stroke="#222" stroke-width="1.500"/></symbol>
    </svg>

    <header class="titlebar">
        <svg class="app-icon"><use href="#k-tia"/></svg>
        <h1>Siemens&nbsp; -&nbsp; D:\plc\<span class="cn">邪门子</span>\9.23<span class="cn">南北红绿灯</span>\9.23<span class="cn">南北红绿灯</span></h1>
        <div class="win-buttons small">
            <button aria-label="最小化"><svg><use href="#w-min"/></svg></button>
            <button aria-label="还原"><svg><use href="#w-res"/></svg></button>
            <button aria-label="关闭"><svg><use href="#w-x"/></svg></button>
        </div>
    </header>

    <div class="topbar">
        <div class="topbar-left">
            <nav class="menu">
                <a href="#">项目(P)</a><a href="#">编辑(E)</a><a href="#">视图(V)</a><a href="#">插入(I)</a><a href="#">在线(O)</a><a href="#">选项(N)</a><a href="#">工具(T)</a><a href="#">窗口(W)</a><a href="#">帮助(H)</a>
            </nav>
            <div class="toolbar main-tools">
                <button aria-label="新建"><svg class="i"><use href="#new"/></svg></button>
                <button aria-label="打开"><svg class="i"><use href="#open"/></svg></button>
                <button class="save"><svg class="i"><use href="#save"/></svg>保存项目</button>
                <button aria-label="打印"><svg class="i"><use href="#print"/></svg></button>
                <i class="sep"></i>
                <button aria-label="剪切"><svg class="i"><use href="#cut"/></svg></button>
                <button aria-label="复制"><svg class="i"><use href="#copy"/></svg></button>
                <button aria-label="粘贴"><svg class="i"><use href="#paste"/></svg></button>
                <button aria-label="删除"><svg class="i"><use href="#del"/></svg></button>
                <i class="sep"></i>
                <button class="drop" aria-label="撤消"><svg class="i"><use href="#undo"/></svg><svg class="dd"><use href="#dd"/></svg></button>
                <button class="drop" aria-label="重做"><svg class="i"><use href="#redo"/></svg><svg class="dd"><use href="#dd"/></svg></button>
                <i class="sep"></i>
                <button aria-label="编译"><svg class="i"><use href="#compile"/></svg></button>
                <button aria-label="下载"><svg class="i"><use href="#dl"/></svg></button>
                <button aria-label="上传"><svg class="i"><use href="#ul"/></svg></button>
                <button aria-label="仿真"><svg class="i"><use href="#sim"/></svg></button>
                <button aria-label="运行系统"><svg class="i"><use href="#rt"/></svg></button>
                <i class="sep"></i>
                <button class="go"><svg class="i"><use href="#online"/></svg>转至在线</button>
                <button class="go"><svg class="i"><use href="#offline"/></svg>转至离线</button>
                <i class="sep"></i>
                <button aria-label="可访问的设备"><svg class="i"><use href="#access"/></svg></button>
                <button aria-label="启动 CPU"><svg class="i"><use href="#start"/></svg></button>
                <button aria-label="停止 CPU"><svg class="i"><use href="#stop"/></svg></button>
                <i class="sep"></i>
                <button aria-label="交叉引用"><svg class="i"><use href="#xref"/></svg></button>
                <i class="sep"></i>
                <button aria-label="水平拆分"><svg class="i"><use href="#splith"/></svg></button>
                <button aria-label="垂直拆分"><svg class="i"><use href="#splitv"/></svg></button>
                <i class="sep"></i>
                <input class="project-search" type="text" aria-label="在项目中搜索" placeholder="&lt;在项目中搜索&gt;">
                <button aria-label="搜索"><svg class="i"><use href="#binoc"/></svg></button>
            </div>
        </div>
        <div class="brand">
            <span>Totally Integrated Automation</span>
            <strong>PORTAL</strong>
        </div>
    </div>

    <main class="workspace">
        <aside class="portal-strip"><span>可视化</span></aside>

        <section class="tree-panel">
            <div class="panel-head">
                <h2>项目树</h2>
                <button aria-label="固定"><svg class="w"><use href="#w-cols"/></svg></button>
                <button aria-label="折叠"><svg class="wn"><use href="#w-left"/></svg></button>
            </div>
            <div class="tab-row"><button class="device-tab">设备</button></div>
            <div class="toolbar tree-tools">
                <button aria-label="新建组"><svg class="i"><use href="#newgrp"/></svg></button>
                <i class="sep push"></i>
                <button class="boxed" aria-label="列表"><svg class="i"><use href="#listview"/></svg></button>
                <button aria-label="导出"><svg class="i"><use href="#export"/></svg></button>
            </div>
            <div class="tree-wrap">
                <ul class="tree">
                    <li class="root"><svg class="i"><use href="#doc"/></svg><span><span class="en">9.23</span>南北红绿灯</span></li>
                    <li class="l1"><svg class="i"><use href="#add"/></svg>添加新设备</li>
                    <li class="l1"><svg class="i"><use href="#net"/></svg>设备和网络</li>
                    <li class="l1 open station"><svg class="i"><use href="#f-mod"/></svg><b>PLC_1 [CPU 1214C DC/DC/DC]</b></li>
                    <li class="l2"><svg class="i"><use href="#config"/></svg>设备组态</li>
                    <li class="l2"><svg class="i"><use href="#diag"/></svg>在线和诊断</li>
                    <li class="l2 open"><svg class="i"><use href="#f-blk"/></svg>程序块</li>
                    <li class="l3"><svg class="i"><use href="#add"/></svg>添加新块</li>
                    <li class="l3"><svg class="i"><use href="#ob"/></svg><span class="en-wide">Main [OB1]</span></li>
                    <li class="l3 closed"><svg class="i"><use href="#g-blk"/></svg>系统块</li>
                    <li class="l2 closed"><svg class="i"><use href="#f-gear"/></svg>工艺对象</li>
                    <li class="l2 closed"><svg class="i"><use href="#f-01"/></svg>外部源文件</li>
                    <li class="l2 open"><svg class="i"><use href="#f-tag"/></svg><span><span class="en">PLC </span>变量</span></li>
                    <li class="l3"><svg class="i"><use href="#tags"/></svg>显示所有变量</li>
                    <li class="l3"><svg class="i"><use href="#add"/></svg>添加新变量表</li>
                    <li class="l3"><svg class="i"><use href="#tagtab"/></svg><span>默认变量表<span class="en-wide"> [51]</span></span></li>
                    <li class="l2 closed"><svg class="i"><use href="#f-str"/></svg><span><span class="en">PLC </span>数据类型</span></li>
                    <li class="l2 closed"><svg class="i"><use href="#f-watch"/></svg>监控与强制表</li>
                    <li class="l2 closed"><svg class="i"><use href="#f-bak"/></svg>在线备份</li>
                    <li class="l2 closed"><svg class="i"><use href="#f-tr"/></svg><span class="en-wide">Traces</span></li>
                    <li class="l2 closed"><svg class="i"><use href="#f-prx"/></svg>设备代理数据</li>
                    <li class="l2"><svg class="i"><use href="#proginfo"/></svg>程序信息</li>
                    <li class="l2"><svg class="i"><use href="#textlist"/></svg><span><span class="en">PLC </span>报警文本列表</span></li>
                    <li class="l2 closed"><svg class="i"><use href="#f-mod"/></svg>本地模块</li>
                    <li class="l1 open station"><svg class="i"><use href="#f-hmi"/></svg><b>HMI_1 [KTP700 Basic PN]</b></li>
                    <li class="l2"><svg class="i"><use href="#config"/></svg>设备组态</li>
                    <li class="l2"><svg class="i"><use href="#diag"/></svg>在线和诊断</li>
                    <li class="l2"><svg class="i"><use href="#wrench"/></svg>运行系统设置</li>
                    <li class="l2 open"><svg class="i"><use href="#f-scr"/></svg>画面</li>
                    <li class="l3"><svg class="i"><use href="#add"/></svg>添加新画面</li>
                    <li class="l3 selected"><svg class="i"><use href="#rootscr"/></svg>根画面</li>
                    <li class="l2 closed"><svg class="i"><use href="#f-wr"/></svg>画面管理</li>
                    <li class="l2 closed"><svg class="i"><use href="#f-htag"/></svg><span><span class="en">HMI </span>变量</span></li>
                    <li class="l2"><svg class="i"><use href="#conn"/></svg>连接</li>
                    <li class="l2"><svg class="i"><use href="#mail"/></svg><span><span class="en">HMI </span>报警</span></li>
                    <li class="l2"></li>
                </ul>
                <div class="vscroll">
                    <button aria-label="向上"><svg><use href="#ch-u"/></svg></button>
                    <div class="track tree-v"><div class="thumb grip-v"></div></div>
                    <button aria-label="向下"><svg><use href="#ch-d"/></svg></button>
                </div>
            </div>
            <div class="hscroll tree-h">
                <button aria-label="向左"><svg><use href="#ch-l"/></svg></button>
                <div class="track"><div class="thumb grip-h"></div></div>
                <button aria-label="向右"><svg><use href="#ch-r"/></svg></button>
            </div>
            <div class="section-head detail-head"><button aria-label="展开"><svg><use href="#ch-r"/></svg></button><h3>详细视图</h3></div>
        </section>

        <section class="editor">
            <div class="editor-head">
                <nav class="crumbs">
                    <a href="#">9.23<span class="cn">南北红绿灯</span></a><svg><use href="#w-right"/></svg>
                    <a href="#">HMI_1 [KTP700 Basic PN]</a><svg><use href="#w-right"/></svg>
                    <a href="#" class="cn">画面</a><svg><use href="#w-right"/></svg>
                    <a href="#" class="cn">根画面</a>
                </nav>
                <div class="win-buttons">
                    <button aria-label="最小化"><svg><use href="#w-min"/></svg></button>
                    <button aria-label="还原"><svg><use href="#w-res"/></svg></button>
                    <button aria-label="最大化"><svg><use href="#w-max"/></svg></button>
                    <button aria-label="关闭"><svg><use href="#w-x"/></svg></button>
                </div>
            </div>
            <div class="tab-row"></div>
            <div class="toolbar format-tools">
                <div class="font-box"><input type="text" aria-label="字体"><button aria-label="字体列表"><svg class="i"><use href="#textlist"/></svg></button></div>
                <div class="size-box"><input type="text" aria-label="字号"><button aria-label="字号列表"><svg class="w"><use href="#w-down"/></svg></button></div>
                <button class="glyph bold">B</button>
                <button class="glyph italic">I</button>
                <button class="glyph under">U</button>
                <button class="glyph strike">S</button>
                <button class="drop glyph"><span>A<sup>▴</sup></span><svg class="dd"><use href="#dd"/></svg></button>
                <button class="drop" aria-label="对齐"><svg class="i"><use href="#align"/></svg><svg class="dd"><use href="#dd"/></svg></button>
                <i class="sep"></i>
                <button class="drop glyph"><span class="font-color">A</span><svg class="dd"><use href="#dd"/></svg></button>
                <button class="drop active" aria-label="填充"><svg class="i"><use href="#fill"/></svg><svg class="dd"><use href="#dd"/></svg></button>
                <button class="drop" aria-label="边框颜色"><svg class="i"><use href="#brush"/></svg><svg class="dd"><use href="#dd"/></svg></button>
                <i class="sep"></i>
                <button class="drop" aria-label="线宽"><svg class="i"><use href="#lines"/></svg><svg class="dd"><use href="#dd"/></svg></button>
                <button class="drop" aria-label="线型"><svg class="i"><use href="#line"/></svg><svg class="dd"><use href="#dd"/></svg></button>
                <i class="sep"></i>
                <button class="drop" aria-label="层"><svg class="i"><use href="#layer"/></svg><svg class="dd"><use href="#dd"/></svg></button>
                <button class="drop" aria-label="旋转"><svg class="i"><use href="#rotate"/></svg><svg class="dd"><use href="#dd"/></svg></button>
                <button class="drop" aria-label="居中"><svg class="i"><use href="#centerh"/></svg><svg class="dd"><use href="#dd"/></svg></button>
                <button class="drop" aria-label="分布"><svg class="i"><use href="#distr"/></svg><svg class="dd"><use href="#dd"/></svg></button>
                <button class="drop" aria-label="等宽"><svg class="i"><use href="#samew"/></svg><svg class="dd"><use href="#dd"/></svg></button>
                <i class="sep"></i>
                <button aria-label="格式刷"><svg class="i"><use href="#format"/></svg></button>
                <button class="drop" aria-label="次序"><svg class="i"><use href="#order"/></svg><svg class="dd"><use href="#dd"/></svg></button>
                <button aria-label="缩放选区"><svg class="i"><use href="#zoomsel"/></svg></button>
            </div>

            <div class="canvas-wrap">
                <div class="canvas">
                    <div class="device">
                        <div class="siemens">SIEMENS</div>
                        <div class="simatic">SIMATIC HMI</div>
                        <div class="screen">
                            <div class="softkeys">
                                <div class="softkey"><svg viewBox="0 0 52 54"><path d="M26 0l26 26H0zM3 28h46v26H35V41H24v13H3z" fill="#868384"/></svg></div>
                                <div class="softkey"></div><div class="softkey"></div><div class="softkey"></div><div class="softkey"></div><div class="softkey"></div><div class="softkey"></div>
                                <div class="softkey"><svg viewBox="0 0 52 54"><path d="M0 0h52v54H0z" fill="#868384"/><circle cx="26" cy="27" r="17" fill="none" stroke="#ccc" stroke-width="2.500"/><path d="M26 17v20" stroke="#ccc" stroke-width="3"/></svg></div>
                            </div>
                            <div class="dots"></div>
                            <div class="lamp lamp1"></div>
                            <div class="lamp lamp2"></div>
                            <div class="lamp lamp3"></div>
                            <div class="lamp lamp4"></div>
                            <div class="lamp lamp5"></div>
                            <div class="lamp lamp6"></div>
                            <button class="hmi-btn start-btn">开始</button>
                            <button class="hmi-btn stop-btn">停止</button>
                        </div>
                        <div class="fkeys"><i></i><i></i><i></i><i></i><i></i><i></i><i></i><i></i></div>
                    </div>
                </div>
                <div class="vscroll">
                    <button aria-label="向上"><svg><use href="#ch-u"/></svg></button>
                    <div class="track canvas-v"><div class="thumb grip-v"></div></div>
                    <button aria-label="向下"><svg><use href="#ch-d"/></svg></button>
                </div>
            </div>

            <div class="zoom-row">
                <div class="hscroll canvas-h">
                    <button aria-label="向左"><svg><use href="#ch-l"/></svg></button>
                    <div class="track"><div class="thumb grip-h"></div></div>
                    <button aria-label="向右"><svg><use href="#ch-r"/></svg></button>
                </div>
                <div class="zoom-select">
                    <select aria-label="缩放"><option>100%</option></select>
                    <svg><use href="#w-down"/></svg>
                </div>
                <div class="zoom-slider"><input type="range" min="0" max="15" value="5" aria-label="缩放滑块"></div>
                <button class="corner" aria-label="概览"><svg class="i"><use href="#ovl"/></svg></button>
            </div>

            <div class="inspector-head">
                <button class="itab"><svg class="i"><use href="#props"/></svg>属性</button>
                <button class="itab active"><svg class="i"><use href="#infoarr"/></svg>信息<svg class="i badge"><use href="#info"/></svg></button>
                <button class="itab"><svg class="i"><use href="#diag"/></svg>诊断</button>
                <div class="win-buttons">
                    <button aria-label="还原"><svg><use href="#w-res"/></svg></button>
                    <button aria-label="列表"><svg><use href="#w-list"/></svg></button>
                    <button aria-label="折叠"><svg><use href="#w-down"/></svg></button>
                </div>
            </div>
            <div class="sub-tabs">
                <button>常规<svg class="i"><use href="#info"/></svg></button>
                <button>交叉引用</button>
                <button class="active">编译</button>
            </div>
        </section>

        <aside class="toolbox">
            <div class="panel-head">
                <h2>工具箱</h2>
                <button aria-label="浮动"><svg class="w"><use href="#w-res"/></svg></button>
                <button class="flip" aria-label="固定"><svg class="w"><use href="#w-cols"/></svg></button>
                <button aria-label="折叠"><svg class="wn"><use href="#w-right"/></svg></button>
            </div>
            <h3 class="options-head">选项</h3>
            <div class="toolbar box-tools">
                <button aria-label="选择"><svg class="i"><use href="#t-cursor"/></svg></button>
                <button aria-label="图章"><svg class="i"><use href="#t-stamp"/></svg></button>
                <button aria-label="设置"><svg class="i"><use href="#t-opt"/></svg></button>
                <button class="more" aria-label="列"><svg class="i"><use href="#t-table"/></svg></button>
                <button class="push" aria-label="窗格"><svg class="i"><use href="#t-pane"/></svg></button>
            </div>
            <div class="section-head"><button aria-label="折叠"><svg><use href="#ch-d"/></svg></button><h3>基本对象</h3></div>
            <div class="palette">
                <svg><use href="#b-line"/></svg><svg><use href="#b-ell"/></svg><svg><use href="#b-cir"/></svg><svg><use href="#b-rect"/></svg>
                <svg><use href="#b-text"/></svg><svg><use href="#b-img"/></svg>
            </div>
            <div class="section-head"><button aria-label="折叠"><svg><use href="#ch-d"/></svg></button><h3>元素</h3></div>
            <div class="palette">
                <svg><use href="#e-io"/></svg><svg><use href="#e-btn"/></svg><svg><use href="#e-sym"/></svg><svg><use href="#e-gio"/></svg>
                <svg><use href="#e-date"/></svg><svg><use href="#e-bar"/></svg><svg><use href="#e-sw"/></svg>
            </div>
            <div class="section-head"><button aria-label="折叠"><svg><use href="#ch-d"/></svg></button><h3>控件</h3></div>
            <div class="palette last">
                <svg><use href="#c-alarm"/></svg><svg><use href="#c-trend"/></svg><svg><use href="#c-user"/></svg><svg><use href="#c-html"/></svg>
                <svg><use href="#c-recipe"/></svg><svg><use href="#c-diag"/></svg>
            </div>
            <div class="section-head"><button aria-label="展开"><svg><use href="#ch-r"/></svg></button><h3>图形</h3></div>
        </aside>

        <nav class="side-tabs">
            <button class="active"><svg class="i"><use href="#s-tool"/></svg>工具箱</button>
            <button><svg class="i"><use href="#s-anim"/></svg>动画</button>
            <button><svg class="i"><use href="#s-lay"/></svg>布局</button>
            <button><svg class="i"><use href="#s-ins"/></svg>指令</button>
            <button><svg class="i"><use href="#s-task"/></svg>任务</button>
            <button class="short"><svg class="i"><use href="#s-lib"/></svg>库</button>
        </nav>
    </main>

    <footer class="portal-bar">
        <a href="#" class="portal-link"><svg><use href="#w-left"/></svg><span>Portal <span class="cn">视图</span></span></a>
        <button><svg class="i"><use href="#overview"/></svg>总览</button>
        <button><svg class="i"><use href="#tagtab"/></svg>默认变量表</button>
        <button><svg class="i"><use href="#ob"/></svg><span class="en">Main (OB1)</span></button>
        <button class="active"><svg class="i"><use href="#scr"/></svg>根画面</button>
        <div class="status">
            <svg class="status-icon" viewBox="0 0 30 30"><path d="M0 0h30v30H0z" fill="#c8c8c8"/><path d="M4 4h11v14H4z" fill="#f4f6ff" stroke="#99a"/><path d="M4 8h11M4 13h11" stroke="#99a"/><path d="M3 21h24v6H3z" fill="#10104f"/><path d="M5 24h20" stroke="#fff" stroke-width="3" stroke-dasharray="6 1"/><path d="M24 18V9h-4" fill="none" stroke="#10104f" stroke-width="2"/><path d="M16 9l5-4v8z" fill="#10104f"/></svg>
            <p><svg viewBox="0 0 24 24"><circle cx="12" cy="12" r="11.500" fill="#1414f0"/><path d="M5 12l5 6 9-11" fill="none" stroke="#fff" stroke-width="3"/></svg>项目 <span class="en">9.23</span>南北红绿灯 已打开。</p>
        </div>
    </footer>

    <div class="taskbar">
        <div class="apps">
            <button aria-label="开始"><svg><use href="#k-win"/></svg></button>
            <label class="search"><svg class="glass"><use href="#k-search"/></svg><input type="text" placeholder="搜索" aria-label="搜索"><svg class="bear"><use href="#k-bear"/></svg></label>
            <button aria-label="任务视图"><svg><use href="#k-view"/></svg></button>
            <button aria-label="QQ"><svg><use href="#k-qq"/></svg></button>
            <button class="running" aria-label="Edge"><svg><use href="#k-edge"/></svg></button>
            <button aria-label="文件资源管理器"><svg><use href="#k-folder"/></svg></button>
            <button aria-label="监视器"><svg><use href="#k-chart"/></svg></button>
            <button class="running" aria-label="微信"><svg><use href="#k-wechat"/></svg></button>
            <button class="running" aria-label="TIA Portal"><svg><use href="#k-tia"/></svg></button>
            <button class="snip" aria-label="截图工具"><svg><use href="#k-snip"/></svg></button>
        </div>
        <div class="tray">
            <svg class="up" viewBox="0 0 16 16"><path d="M1 12l7-8 7 8" fill="none" stroke="#222" stroke-width="2"/></svg>
            <span>英</span>
            <span>拼</span>
            <svg class="wifi"><use href="#k-wifi"/></svg>
            <svg><use href="#k-vol"/></svg>
            <svg><use href="#k-bat"/></svg>
            <time>11:02<br>2024/10/22</time>
            <svg><use href="#k-bell"/></svg>
        </div>
        <div class="watermark">CSDN @zl104733369</div>
    </div>
</body>

</html>
```

FILE: styles.css
```css
* {
    padding: 0;
    margin: 0;
    box-sizing: border-box;
}

body {
    display: grid;
    grid-template-columns: minmax(0, 1fr);
    grid-template-rows: auto auto minmax(0, 1fr) auto auto;
    height: 100vh;
    overflow: hidden;
    font-family: "Noto Sans", "Noto Sans CJK SC", sans-serif;
    font-size: 18px;
    line-height: 24px;
    color: #111;
    background-color: #ccc;
}

button,
input,
select {
    font: inherit;
    color: inherit;
    background: none;
    border: none;
    outline: none;
}

button {
    display: flex;
    align-items: center;
    justify-content: center;
    white-space: nowrap;
}

a {
    color: inherit;
    text-decoration: none;
}

svg {
    display: block;
    flex: none;
}

h1,
h2,
h3 {
    font-weight: 600;
}

.sprite {
    position: absolute;
    width: 0;
    height: 0;
}

.i {
    width: 24px;
    height: 24px;
}

.dd {
    width: 10px;
    height: 24px;
    color: #888;
}

.w {
    width: 18px;
    height: 24px;
}

.wn {
    width: 12px;
    height: 24px;
}

.cn {
    font-size: 22px;
}

.en {
    font-size: 16px;
}

.en-wide {
    font-size: 17px;
}

/* title bar */
.titlebar {
    display: flex;
    align-items: center;
    height: 34px;
    padding: 0 8px;
    color: #fff;
    background: linear-gradient(#a8a8a8 0, #7c7c7c 10px, #575757 11px, #575757 100%);
    border-bottom: 2px solid #1c1c1c;
}

.app-icon {
    width: 24px;
    height: 24px;
    margin-right: 10px;
}

.titlebar h1 {
    flex: 1;
    font-size: 19px;
    white-space: nowrap;
}

.win-buttons {
    display: flex;
    gap: 10px;
    color: #fff;
}

.win-buttons svg {
    width: 18px;
    height: 24px;
}

.small {
    gap: 8px;
}

.small svg {
    width: 15px;
    height: 20px;
}

/* menu and main toolbar */
.topbar {
    display: flex;
    justify-content: space-between;
    height: 76px;
    background-color: #ccc;
    border-bottom: 2px solid #2c334d;
}

.menu {
    display: flex;
    gap: 26px;
    padding: 9px 0 0 17px;
    color: #8c8c8c;
}

.toolbar {
    display: flex;
    align-items: center;
    gap: 12px;
}

.main-tools {
    height: 45px;
    padding-left: 20px;
    font-size: 19px;
    color: #777;
}

.main-tools .dd {
    color: #777;
}

.sep {
    width: 1px;
    height: 34px;
    margin: 0 -3px;
    border-left: 2px dotted #a0a0a0;
}

.save {
    gap: 9px;
    margin-left: -4px;
    padding-right: 4px;
    color: #111;
}

.go {
    gap: 8px;
    padding-right: 2px;
}

.drop {
    gap: 6px;
}

.project-search {
    width: 180px;
    height: 27px;
    padding-left: 6px;
    font-size: 18px;
    background-color: #fff;
    border: 2px solid #999;
}

.project-search::placeholder {
    color: #777;
}

.brand {
    display: flex;
    flex-direction: column;
    align-items: flex-end;
    padding: 20px 35px 0 0;
    font-size: 20px;
    font-weight: 600;
}

.brand span {
    padding-right: 36px;
}

.brand strong {
    font-size: 26px;
    font-weight: 600;
    line-height: 20px;
    color: #6b6b6b;
}

/* workspace */
.workspace {
    display: grid;
    grid-template-columns: 35px 360px minmax(0, 1fr) 298px 35px;
    grid-template-rows: minmax(0, 1fr);
    min-height: 0;
}

.portal-strip {
    height: 370px;
    padding: 168px 0 0 3px;
    border-bottom: 2px solid #eee;
    background: linear-gradient(#b2b2b2 36px, #f0f0f0 36px, #f0f0f0 38px, #b2b2b2 38px);
    box-shadow: 0 900px 0 900px #b2b2b2;
    clip-path: inset(0 0 -900px 0);
    color: #fff;
    font-size: 23px;
    font-weight: 600;
}

.portal-strip span {
    display: block;
    writing-mode: vertical-rl;
    text-orientation: sideways;
    transform: rotate(180deg);
}

.tree-panel {
    display: flex;
    flex-direction: column;
    min-height: 0;
    background-color: #c3c3c3;
    border-left: 1px solid #2c334d;
}

.panel-head {
    display: flex;
    align-items: center;
    gap: 12px;
    flex: none;
    height: 36px;
    padding: 0 10px 0 9px;
    color: #fff;
    background-color: #b2b2b2;
}

.panel-head h2 {
    flex: 1;
    font-size: 22px;
}

.tab-row {
    flex: none;
    display: flex;
    align-items: flex-end;
    height: 42px;
    padding-left: 9px;
    background-color: #ccc;
    border-top: 5px solid #f0f0f0;
    border-bottom: 1px solid #888;
}

.device-tab {
    width: 95px;
    height: 33px;
    margin-bottom: -1px;
    padding: 0 14px 3px 0;
    font-size: 22px;
    font-weight: 600;
    background: linear-gradient(#f8f8f8, #eaeaea);
    border: 2px solid #888;
    border-bottom: none;
}

.tree-tools {
    flex: none;
    height: 41px;
    padding: 0 14px 0 10px;
    background-color: #eaeaea;
    gap: 8px;
}

.push {
    margin-left: auto;
}

.boxed {
    width: 32px;
    height: 32px;
    background-color: #fff;
    border: 2px solid #3a62e0;
    border-radius: 3px;
}

.tree-wrap {
    flex: 1;
    display: flex;
    min-height: 0;
    padding-top: 31px;
    padding-right: 1px;
}

.tree {
    flex: 1;
    display: grid;
    grid-auto-rows: 29px 28px;
    overflow: hidden;
    list-style: none;
    margin-right: 2px;
}

.tree li {
    display: flex;
    align-items: center;
    gap: 6px;
    white-space: nowrap;
    background: linear-gradient(90deg, #f0f0f0 300px, #c8c8c8 300px, #c8c8c8 301px, #fff 301px, #fff 303px, #f0f0f0 303px);
    border-bottom: 2px solid #fcfcfc;
}

.tree li.root,
.tree li.station {
    background: linear-gradient(90deg, #e0e0e0 300px, #c8c8c8 300px, #c8c8c8 301px, #fff 301px, #fff 303px, #e0e0e0 303px);
}

.station b {
    font-size: 17px;
    font-weight: 600;
}

.tree .root {
    padding-left: 1px;
    gap: 4px;
}

.tree .l1 {
    padding-left: 25px;
}

.tree .l2 {
    padding-left: 52px;
}

.tree .l3 {
    padding-left: 79px;
}

.open::before,
.closed::before {
    content: "";
    width: 12px;
    height: 12px;
    margin: 0 2px 0 -20px;
    background-color: #111;
}

.open::before {
    clip-path: polygon(0 25%, 100% 25%, 50% 80%);
}

.closed::before {
    clip-path: polygon(25% 0, 80% 50%, 25% 100%);
}

.tree li.selected {
    background: linear-gradient(90deg, #d8dee2 301px, #ccd3d8 301px);
    border: 1px dashed #888;
    border-width: 1px 0;
}

.vscroll {
    display: flex;
    flex-direction: column;
    width: 25px;
    background-color: #c3c3c3;
}

.hscroll {
    display: flex;
    height: 27px;
    background-color: #c3c3c3;
}

.vscroll button,
.hscroll button {
    flex: none;
    width: 25px;
    height: 27px;
    color: #555;
    background: linear-gradient(#f2f2f2, #dcdcdc);
    border: 1px solid #999;
    box-shadow: inset 0 0 0 1px #fff;
}

.vscroll svg,
.hscroll svg,
.section-head svg {
    width: 16px;
    height: 16px;
}

.track {
    flex: 1;
    padding: 2px 0;
}

.hscroll .track {
    padding: 0 3px;
}

.thumb {
    display: flex;
    align-items: center;
    justify-content: center;
    width: 100%;
    height: 100%;
    border: 1px solid #999;
    box-shadow: inset 0 0 0 1px #fff;
    background: linear-gradient(#ebebeb, #d6d6d6);
}

.tree-v .thumb {
    height: 43%;
}

.canvas-v .thumb {
    height: 85%;
}

.canvas-h .thumb {
    width: 87%;
}

.grip-v {
    background: linear-gradient(90deg, #ebebeb, #d6d6d6);
}

.grip-v::after,
.grip-h::after {
    content: "";
    width: 12px;
    height: 11px;
    background: repeating-linear-gradient(#666 0, #666 2px, transparent 2px, transparent 3px);
}

.grip-h::after {
    background: repeating-linear-gradient(90deg, #666 0, #666 2px, transparent 2px, transparent 3px);
}

.tree-h {
    padding-right: 27px;
}

.section-head {
    flex: none;
    display: flex;
    align-items: stretch;
    height: 35px;
    border-top: 4px solid #9a9a9a;
    border-bottom: 1px solid #888;
    background: linear-gradient(#f2f2f2 0, #e4e4e4 50%, #d6d6d6 51%, #dadada 100%);
}

.section-head button {
    width: 32px;
    border-right: 2px solid #999;
}

.section-head h3 {
    padding-left: 5px;
    font-size: 22px;
    line-height: 28px;
}

.detail-head {
    border-top-color: #1e2538;
}

/* editor */
.editor {
    display: flex;
    flex-direction: column;
    min-height: 0;
    min-width: 0;
    overflow: hidden;
    border-left: 4px solid #1e2538;
    border-right: 5px solid #1e2538;
}

.editor-head {
    display: flex;
    align-items: center;
    justify-content: space-between;
    flex: none;
    height: 36px;
    padding: 0 8px;
    color: #fff;
    background-color: #2c334d;
}

.crumbs {
    display: flex;
    align-items: center;
    font-size: 20px;
    font-weight: 600;
}

.crumbs svg {
    width: 8px;
    height: 16px;
    margin: 0 16px;
}

.crumbs .cn {
    font-size: 22px;
}

.format-tools {
    flex: none;
    height: 42px;
    padding-left: 9px;
    background-color: #eaeaea;
    border-bottom: 2px solid #c0c4c8;
}

.format-tools .sep {
    margin: 0 -2px;
}

.font-box,
.size-box {
    display: flex;
    width: 167px;
    height: 27px;
    border: 2px solid #999;
    background-color: #f0f0f0;
}

.size-box {
    width: 58px;
}

.font-box input,
.size-box input {
    flex: 1;
    min-width: 0;
    border-right: 1px solid #999;
}

.font-box button,
.size-box button {
    width: 24px;
    filter: grayscale(1);
    opacity: 0.7;
}

.size-box .w {
    width: 12px;
    color: #555;
}

.glyph {
    min-width: 24px;
    font-size: 24px;
    color: #444;
}

.glyph span {
    min-width: 24px;
}

.glyph sup {
    font-size: 14px;
    line-height: 10px;
}

.bold {
    font-weight: 800;
}

.italic {
    font-family: "Liberation Serif", serif;
    font-style: italic;
    font-weight: 700;
}

.under {
    text-decoration: underline;
}

.strike {
    text-decoration: line-through;
}

.font-color {
    line-height: 22px;
    border-bottom: 4px solid #777;
}

.active .dd {
    color: #000;
}

.canvas-wrap {
    flex: 1;
    display: flex;
    min-height: 0;
}

.canvas {
    flex: 1;
    min-width: 0;
    padding-left: 102px;
    background-color: #a8a9ab;
    overflow: hidden;
}

.device {
    position: relative;
    height: 100%;
    background-color: #778696;
    overflow: hidden;
}

.siemens {
    position: absolute;
    left: 94px;
    top: 47px;
    width: 235px;
    height: 63px;
    font-family: "Open Sans", sans-serif;
    font-size: 47px;
    font-weight: 800;
    line-height: 62px;
    text-align: center;
    color: #fff;
    background-color: #3e7b82;
}

.simatic {
    position: absolute;
    left: 976px;
    top: 48px;
    font-family: Lato, sans-serif;
    font-size: 54px;
    font-weight: 300;
    line-height: 62px;
    white-space: nowrap;
    color: #fff;
}

.screen {
    position: absolute;
    left: 97px;
    top: 196px;
    width: 1199px;
    height: 721px;
    background: repeating-linear-gradient(-60deg, #f8f8f8 0, #f8f8f8 3px, #a4a4a4 3px, #a4a4a4 5px);
}

.screen::before {
    content: "";
    position: absolute;
    inset: 5px;
    background: linear-gradient(#bababa, #b4b4b4 60px);
}

.dots {
    position: absolute;
    inset: 5px;
    background-image: radial-gradient(circle, #3c3c3c 1px, transparent 1px);
    background-size: 12px 12px;
    background-position: 2px 2px;
}

.softkeys {
    position: absolute;
    left: 23px;
    right: 23px;
    bottom: 5px;
    display: flex;
    gap: 47px;
}

.softkey {
    display: flex;
    justify-content: center;
    width: 103px;
    height: 71px;
    padding-top: 12px;
    border-radius: 4px 4px 0 0;
    background: linear-gradient(#d6d6d6, #cac8c8);
}

.softkey svg {
    width: 52px;
    height: 54px;
}

.lamp {
    position: absolute;
    width: 142px;
    height: 142px;
    border: 2px solid #454a60;
    border-radius: 50%;
    background-color: #dddbde;
}

.lamp1 {
    left: 163px;
    top: 98px;
}

.lamp2 {
    left: 349px;
    top: 98px;
}

.lamp3 {
    left: 519px;
    top: 98px;
}

.lamp4 {
    left: 688px;
    top: 134px;
}

.lamp5 {
    left: 688px;
    top: 296px;
}

.lamp6 {
    left: 691px;
    top: 464px;
}

.hmi-btn {
    position: absolute;
    left: 857px;
    padding-right: 4px;
    font-size: 25px;
    font-weight: 600;
    color: #fff;
    border: 3px solid #434a57;
    border-radius: 5px;
    background: linear-gradient(#84858e 0, #646571 22px);
}

.start-btn {
    top: 98px;
    width: 269px;
    height: 216px;
}

.stop-btn {
    top: 340px;
    width: 281px;
    height: 203px;
}

.fkeys {
    position: absolute;
    left: 120px;
    top: 979px;
    display: flex;
    gap: 42px;
}

.fkeys i {
    width: 108px;
    height: 60px;
    border: 7px solid #000;
    border-top-color: #fff;
    border-left-color: #fff;
    outline: 1px solid #111;
    background-color: #808080;
}

.zoom-row {
    flex: none;
    display: flex;
    align-items: center;
    height: 29px;
    background-color: #eaeaea;
}

.canvas-h {
    flex: 1;
}

.zoom-select {
    position: relative;
    width: 236px;
    height: 27px;
    margin-left: 10px;
}

.zoom-select select {
    width: 100%;
    height: 100%;
    padding-left: 4px;
    font-size: 18px;
    line-height: 24px;
    appearance: none;
    background: linear-gradient(90deg, #fff 210px, #999 210px, #999 211px, #d0d0d0 211px);
    border: 1px solid #888;
}

.zoom-select svg {
    position: absolute;
    right: 6px;
    top: 4px;
    width: 12px;
    height: 18px;
    pointer-events: none;
}

.zoom-slider {
    width: 101px;
    height: 26px;
    margin: 0 22px 0 25px;
    background: repeating-linear-gradient(90deg, #333 0, #333 2px, transparent 2px, transparent 6px) 0 100% / 100% 6px no-repeat;
}

.zoom-slider input {
    display: block;
    width: 100%;
    height: 20px;
    appearance: none;
    background: linear-gradient(#777, #777) 0 50% / 100% 1px no-repeat;
}

.zoom-slider input::-webkit-slider-thumb {
    appearance: none;
    width: 12px;
    height: 16px;
    background-color: #aaa;
    clip-path: polygon(0 0, 100% 0, 100% 65%, 50% 100%, 0 65%);
}

.corner {
    width: 25px;
    height: 29px;
    background-color: #fff;
}

.inspector-head {
    flex: none;
    display: flex;
    align-items: flex-end;
    justify-content: flex-end;
    gap: 2px;
    height: 46px;
    background-color: #b2b2b2;
    border-top: 5px solid #1e2538;
    border-bottom: 5px solid #f0f0f0;
}

.itab {
    justify-content: flex-start;
    gap: 4px;
    width: 113px;
    height: 32px;
    padding-left: 4px;
    font-size: 22px;
    font-weight: 500;
    color: #666;
    background: linear-gradient(#dcdcdc, #cfcfcf);
    border: 2px solid #888;
    border-bottom: none;
}

.itab.active {
    width: 121px;
    font-weight: 600;
    color: #111;
    background: #f0f0f0;
    border-color: #f0f0f0;
}

.badge {
    margin-left: 12px;
}

.inspector-head .win-buttons {
    align-self: center;
    padding: 0 6px 4px 26px;
}

.sub-tabs {
    flex: none;
    display: flex;
    align-items: flex-start;
    gap: 2px;
    height: 26px;
    padding: 4px 0 0 9px;
    overflow: hidden;
    background-color: #ccc;
}

.sub-tabs button {
    gap: 16px;
    height: 30px;
    padding: 0 6px 0 15px;
    font-size: 22px;
    font-weight: 500;
    color: #666;
    background: linear-gradient(#dcdcdc, #cfcfcf);
    border: 2px solid #888;
}

.sub-tabs button + button {
    padding-right: 32px;
}

.sub-tabs .active {
    font-weight: 700;
    color: #111;
    background: #f4f4f4;
}

/* toolbox */
.toolbox {
    display: flex;
    flex-direction: column;
    min-height: 0;
    background-color: #f0f0f0;
    border-right: 2px solid #2c334d;
}

.toolbox h2 {
    font-weight: 500;
}

.flip {
    transform: scaleX(-1);
}

.options-head {
    flex: none;
    height: 42px;
    padding: 11px 0 0 9px;
    font-size: 22px;
    background: linear-gradient(#eaeaea 10px, #fafafa 11px, #d8d8d8 30px, #e4e4e4);
    border-bottom: 1px solid #888;
}

.box-tools {
    flex: none;
    height: 41px;
    padding: 0 8px 0 11px;
    background-color: #eaeaea;
}

.more::after {
    content: "";
    align-self: flex-start;
    width: 6px;
    height: 10px;
    margin-left: 11px;
    background-color: #111;
    clip-path: polygon(0 0, 100% 50%, 0 100%);
}

.palette {
    flex: none;
    display: grid;
    grid-template-columns: repeat(4, 42px);
    grid-auto-rows: 42px;
    align-content: start;
    gap: 12px 21px;
    height: 226px;
    padding: 10px 9px;
}

.palette svg {
    width: 42px;
    height: 42px;
}

.palette.last {
    flex: 1;
}

.side-tabs {
    display: flex;
    flex-direction: column;
    align-items: flex-start;
    gap: 3px;
    padding-top: 45px;
    background-color: #b2b2b2;
}

.side-tabs button {
    justify-content: flex-start;
    gap: 6px;
    width: 31px;
    height: 111px;
    padding-top: 3px;
    writing-mode: vertical-rl;
    text-orientation: sideways;
    font-size: 22px;
    color: #555;
    background: linear-gradient(90deg, #e4e4e4, #cfcfcf);
    border: 2px solid #888;
    border-left: none;
}

.side-tabs .active {
    height: 134px;
    color: #111;
    font-weight: 500;
    background: #f0f0f0;
}

.side-tabs .short {
    height: 88px;
}

/* portal bar */
.portal-bar {
    display: flex;
    align-items: center;
    gap: 4px;
    height: 46px;
    color: #fff;
    background-color: #1c1c1c;
    border-bottom: 2px solid #b8b8c4;
}

.portal-link {
    display: flex;
    align-items: center;
    gap: 15px;
    width: 267px;
    padding-left: 52px;
    font-size: 20px;
    font-weight: 600;
}

.portal-link svg {
    width: 12px;
    height: 22px;
}

.portal-bar button {
    justify-content: flex-start;
    gap: 8px;
    width: 170px;
    height: 31px;
    padding-left: 4px;
    font-size: 19px;
    color: #222;
    background-color: #c3c3c3;
}

.portal-bar button .en {
    font-size: 17px;
}

.portal-bar .active {
    font-size: 20px;
    font-weight: 700;
    color: #000;
    background-color: #fff;
}

.status {
    display: flex;
    align-items: center;
    gap: 9px;
    width: 534px;
    height: 100%;
    margin-left: auto;
}

.status-icon {
    width: 30px;
    height: 31px;
}

.status p {
    display: flex;
    align-items: center;
    gap: 4px;
    height: 100%;
    padding-left: 5px;
    font-size: 19px;
    border-left: 1px solid #777;
}

.status p svg {
    width: 24px;
    height: 24px;
    margin-right: 2px;
}

.status .en {
    font-size: 18px;
}

/* taskbar */
.taskbar {
    position: relative;
    display: flex;
    align-items: center;
    justify-content: space-between;
    height: 71px;
    padding: 0 27px 2px 630px;
    background: linear-gradient(90deg, #e0ebf9, #e5dff3 45%, #dfe3f6);
}

.apps {
    display: flex;
    align-items: center;
    gap: 30px;
}

.apps button {
    position: relative;
}

.apps button svg {
    width: 36px;
    height: 36px;
}

.search {
    display: flex;
    align-items: center;
    width: 328px;
    height: 47px;
    margin: 0 -10px;
    padding: 0 4px 0 15px;
    background-color: #f7f6fc;
    border: 2px solid #d4d0e4;
    border-radius: 24px;
}

.glass {
    width: 22px;
    height: 24px;
}

.search input {
    flex: 1;
    min-width: 0;
    padding-left: 16px;
    font-size: 21px;
}

.search input::placeholder {
    color: #555;
}

.bear {
    width: 70px;
    height: 40px;
}

.running::after {
    content: "";
    position: absolute;
    left: 14px;
    top: 42px;
    width: 8px;
    height: 5px;
    border-radius: 3px;
    background-color: #808090;
}

.snip {
    align-self: flex-end;
    margin-bottom: -14px;
}

.tray {
    display: flex;
    align-items: center;
    gap: 13px;
    font-size: 21px;
    color: #1c1c1c;
}

.tray svg {
    width: 24px;
    height: 26px;
}

.tray .up {
    width: 16px;
    margin-right: 3px;
}

.tray .wifi {
    margin-left: 7px;
}

.tray span {
    padding: 0 13px;
}

.tray time {
    padding-left: 13px;
    font-size: 17px;
    text-align: right;
}

.watermark {
    position: absolute;
    right: 3px;
    top: 9px;
    font-family: "Liberation Sans", sans-serif;
    font-size: 42px;
    line-height: 48px;
    color: rgba(225, 225, 228, 0.5);
    text-shadow: 1px 1px 1px rgba(90, 90, 90, 0.5), -1px -1px 0 rgba(255, 255, 255, 0.5);
    pointer-events: none;
}
```
